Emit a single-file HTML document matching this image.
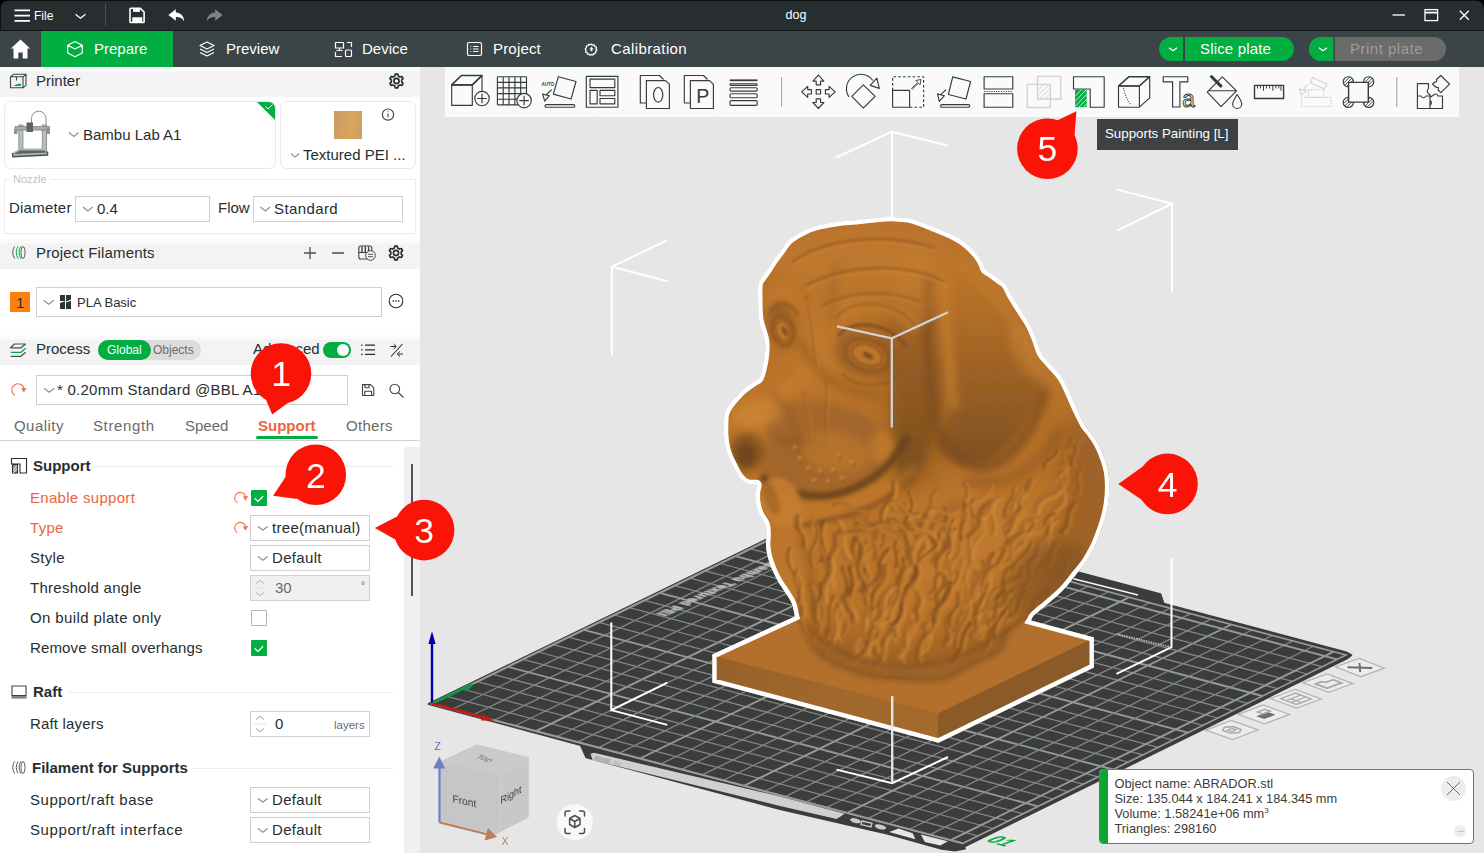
<!DOCTYPE html>
<html><head><meta charset="utf-8"><title>dog</title>
<style>
*{box-sizing:border-box;margin:0;padding:0}
html,body{width:1484px;height:853px;overflow:hidden;background:#e6e6e6;font-family:"Liberation Sans",sans-serif;color:#262e30}
.abs{position:absolute}
#titlebar{position:absolute;left:0;top:0;width:1484px;height:31px;background:#262e30;border-top:1px solid #0d0f10;border-left:1px solid #0d0f10;border-bottom:1px solid #15191a}
#tabbar{position:absolute;left:0;top:31px;width:1484px;height:36px;background:#3b4446}
#tabbar .tab{position:absolute;top:0;height:36px;color:#fff;font-size:15px;line-height:36px;white-space:nowrap}
#prep{position:absolute;left:41px;top:0;width:132px;height:36px;background:#00ae42}
.t{position:absolute;white-space:nowrap;line-height:1}
#left{position:absolute;left:0;top:67px;width:420px;height:786px;background:#fff;overflow:hidden}
.hdr{position:absolute;left:0;width:420px;background:linear-gradient(#fbfbfb 0,#fafafa 4px,#f3f3f3 5px,#f3f3f3 100%)}
.box{position:absolute;border:1px solid #dbdbdb;background:#fff}
#view{position:absolute;left:420px;top:67px;width:1064px;height:786px;background:#e6e6e6;overflow:hidden}
</style></head><body>
<div id="titlebar">
<svg class="abs" style="left:-1px;top:-1px" width="1484" height="31" viewBox="0 0 1484 31">
 <g stroke="#fff" stroke-width="1.7" fill="none">
  <path d="M14.5 10.3h15.5M14.5 15.6h15.5M14.5 20.9h15.5"/>
  <path d="M75.5 14.2l5 4 5-4" stroke-width="1.3"/>
 </g>
 <path d="M105.5 4v22" stroke="#4a5254" stroke-width="1"/>
 <g fill="none" stroke="#fff" stroke-width="1.6" stroke-linejoin="round">
  <path d="M130.8 8.3h9.5l3.8 3.8v9.6a0.8 0.8 0 0 1-.8.8h-12.5a0.8 0.8 0 0 1-.8-.8v-12.6a0.8 0.8 0 0 1 .8-.8z"/>
 </g>
 <rect x="133" y="8.3" width="7" height="3.6" fill="#fff"/>
 <rect x="132.3" y="17.3" width="10" height="5" fill="#fff"/>
 <path d="M175.8 9.2v3.4c5 .3 8 3.2 8.4 8.8-1.800-3.200-4.600-4.400-8.400-4.300v3.600l-7.400-5.800z" fill="#fff"/>
 <path d="M215.200 9.200v3.400c-5 .3-8 3.200-8.400 8.800 1.800-3.200 4.600-4.400 8.400-4.300v3.600l7.400-5.800z" fill="#7e8486"/>
 <g stroke="#fff" stroke-width="1.3" fill="none">
  <path d="M1392.500 15h12.500"/>
  <rect x="1425" y="9.600" width="12.600" height="11"/>
  <path d="M1425 12.600h12.600" stroke-width="1.800"/>
  <path d="M1459.800 10.800l9 9M1468.800 10.800l-9 9"/>
 </g>
</svg>
<span class="t" style="left:33px;top:8.500px;font-size:12px;color:#fff">File</span>
<span class="t" style="left:784.500px;top:8px;font-size:12.500px;color:#fff">dog</span>
</div>
<div id="tabbar"><div id="prep"></div>
<svg class="abs" style="left:0;top:0" width="1484" height="36" viewBox="0 31 1484 36">
 <path d="M20.500 39.500l9.600 9h-2.600v10h-4.800v-6h-4.400v6h-4.800v-10h-2.600z" fill="#fff"/>
 <g fill="none" stroke="#fff" stroke-width="1.200" stroke-linejoin="round">
  <path d="M75 41.500l7.300 3.700v7.800l-7.300 3.700-7.300-3.700v-7.800zM67.700 45.200l7.300 3.800 7.300-3.800"/>
  <path d="M207 42l7 3.500-7 3.500-7-3.500zM200 49l7 3.500 7-3.500M200 52.500l7 3.500 7-3.500"/>
  <rect x="335.500" y="42.500" width="8" height="5.500"/><path d="M339.500 48v2.500M336.500 50.500h6"/>
  <rect x="345.500" y="50" width="6" height="6.500" rx="1"/>
  <path d="M335.500 52v4.500h6.500M347 42.500h4.500v4.500"/>
  <rect x="467.500" y="42.500" width="14" height="13" rx="1.500"/><path d="M473 46.500h5.500M473 49h5.500M473 51.500h5.500M470.500 46.500h.8M470.500 49h.8M470.500 51.500h.8"/>
  <g transform="translate(591.500 49.300) scale(0.820) translate(-592 -49.300)" stroke-width="1.600"><path d="M592 43l1.500 1.300 2-.3 .7 1.900 1.800 .9-.5 1.900 1 1.700-1.400 1.400 0 2-1.900 .5-1 1.700-2-.4-1.700 1-1.400-1.400-2 0-.5-1.900-1.800-.9 .5-1.900-1-1.700 1.400-1.400 0-2 1.900-.5 1-1.700 2 .4z"/>
  <path d="M592 46.300l2.600 2.800h-1.600v2.600h-2v-2.600h-1.600z" fill="#fff" stroke="none"/></g>
 </g>
 <rect x="1159" y="37" width="135" height="24" rx="12" fill="#00ae42"/>
 <rect x="1183" y="37" width="2" height="24" fill="#3b4446"/>
 <rect x="1309" y="37" width="137" height="24" rx="12" fill="#6b6b6b"/>
 <path d="M1321 37h12.500v24h-12.500a12 12 0 0 1 0-24z" fill="#00ae42"/>
 <rect x="1333.500" y="37" width="1.500" height="24" fill="#3b4446"/>
 <path d="M1169 47.800l4 3 4-3M1319 47.800l4 3 4-3" stroke="#fff" stroke-width="1.300" fill="none"/>
</svg>
<span class="tab" style="left:94px">Prepare</span>
<span class="tab" style="left:226px">Preview</span>
<span class="tab" style="left:362px">Device</span>
<span class="tab" style="left:493px;letter-spacing:0.18px">Project</span>
<span class="tab" style="left:611px;letter-spacing:0.4px">Calibration</span>
<span class="tab" style="left:1200px;letter-spacing:0.16px">Slice plate</span>
<span class="tab" style="left:1350px;color:#9d9d9d;letter-spacing:0.5px">Print plate</span>
</div>
<div id="left">
<style>
#left .t{font-size:15px;color:#262e30}
#left .lbl{position:absolute;left:30px;font-size:15px;line-height:20px;white-space:nowrap;color:#262e30}
#left .cb{position:absolute;border:1px solid #cfcfcf;background:#fff;height:26px}
#left .cb span{position:absolute;top:3px;font-size:15px;line-height:17px;white-space:nowrap;color:#262e30}
#left .h{position:absolute;left:33px;font-size:15px;font-weight:bold;line-height:20px;white-space:nowrap;color:#262e30}
#left .ln{position:absolute;height:1px;background:#ececec}
.chk{position:absolute;width:16px;height:16px;background:#00ae42;border-radius:1px}
</style>
<!-- Printer header (page y=67) -->
<div class="hdr" style="top:0;height:30px"></div>
<span class="t" style="left:36px;top:6px">Printer</span>
<div class="box" style="left:4px;top:34px;width:272px;height:68px;border-radius:7px;border-color:#e9e9e9;overflow:hidden">
 <svg class="abs" style="right:0;top:0" width="18" height="18" viewBox="0 0 18 18"><path d="M0 0h18v18z" fill="#00ae42"/><path d="M8.500 4.500l2.500 2.500 4.500-4.500" stroke="#fff" stroke-width="1" fill="none"/></svg>
</div>
<span class="t" style="left:83px;top:60px">Bambu Lab A1</span>
<div class="box" style="left:280px;top:34px;width:136px;height:68px;border-radius:7px;border-color:#e9e9e9"></div>
<div class="abs" style="left:334px;top:44px;width:28px;height:28px;background:linear-gradient(100deg,#c79a63,#dba55e 60%,#c99d66)"></div>
<span class="t" style="left:303px;top:80px">Textured PEI ...</span>
<!-- Nozzle -->
<div class="box" style="left:4px;top:112px;width:412px;height:55px;border-color:#ececec"></div>
<span class="t" style="left:10px;top:107px;font-size:11px;color:#c3c3c3;background:#fff;padding:0 3px">Nozzle</span>
<span class="t" style="left:9px;top:133px;letter-spacing:0.22px">Diameter</span>
<div class="cb" style="left:75px;top:129px;width:135px"><span style="left:21px">0.4</span></div>
<span class="t" style="left:218px;top:133px">Flow</span>
<div class="cb" style="left:253px;top:129px;width:150px"><span style="left:20px;letter-spacing:0.4px">Standard</span></div>
<!-- Project Filaments -->
<div class="hdr" style="top:172px;height:30px"></div>
<span class="t" style="left:36px;top:178px;letter-spacing:0.17px">Project Filaments</span>
<div class="abs" style="left:10px;top:225px;width:20px;height:20px;background:#ff800f"></div>
<span class="t" style="left:16px;top:228px;font-size:15px">1</span>
<div class="cb" style="left:36px;top:220px;width:346px;height:30px"><span style="left:40px;top:6px;font-size:13px">PLA Basic</span></div>
<!-- Process -->
<div class="hdr" style="top:268px;height:30px"></div>
<span class="t" style="left:36px;top:274px">Process</span>
<div class="abs" style="left:97.500px;top:273px;width:103px;height:20px;border-radius:10px;background:#dcdcdc"></div>
<div class="abs" style="left:97.500px;top:273px;width:53.500px;height:20px;border-radius:10px;background:#00ae42"></div>
<span class="t" style="left:107px;top:277px;font-size:12px;color:#fff">Global</span>
<span class="t" style="left:153px;top:277px;font-size:12px;color:#6b6b6b">Objects</span>
<span class="t" style="left:253px;top:274px">Advanced</span>
<div class="abs" style="left:323px;top:275px;width:28px;height:16px;border-radius:8px;background:#00ae42"></div>
<div class="abs" style="left:337px;top:277px;width:12px;height:12px;border-radius:6px;background:#fff"></div>
<div class="cb" style="left:36px;top:308px;width:312px;height:30px"><span style="left:20px;top:5px;letter-spacing:0.25px">* 0.20mm Standard @BBL A1</span></div>
<!-- tabs -->
<span class="t" style="left:14px;top:351px;color:#6b6b6b;letter-spacing:0.45px">Quality</span>
<span class="t" style="left:93px;top:351px;color:#6b6b6b;letter-spacing:0.62px">Strength</span>
<span class="t" style="left:185px;top:351px;color:#6b6b6b">Speed</span>
<span class="t" style="left:258px;top:351px;color:#e9653f;font-weight:bold">Support</span>
<span class="t" style="left:346px;top:351px;color:#6b6b6b;letter-spacing:0.3px">Others</span>
<div class="abs" style="left:256px;top:369px;width:62px;height:3px;background:#00ae42;border-radius:1.5px"></div>
<div class="abs" style="left:0;top:373px;width:420px;height:1px;background:#d0d0d0"></div>
<!-- scroll track -->
<div class="abs" style="left:404px;top:380px;width:16px;height:406px;background:#f0f0f0"></div>
<div class="abs" style="left:411px;top:397px;width:2px;height:132px;background:#4f5354"></div>
<!-- options -->
<span class="h" style="top:389px">Support</span><div class="ln" style="left:95px;top:399px;width:298px"></div>
<span class="lbl" style="top:421px;color:#e9653f;letter-spacing:0.3px">Enable support</span>
<div class="chk" style="left:251px;top:423px"></div>
<span class="lbl" style="top:451px;color:#e9653f;letter-spacing:0.3px">Type</span>
<div class="cb" style="left:250px;top:448px;width:120px"><span style="left:21px;letter-spacing:0.3px">tree(manual)</span></div>
<span class="lbl" style="top:481px;letter-spacing:0.3px">Style</span>
<div class="cb" style="left:250px;top:478px;width:120px"><span style="left:21px;letter-spacing:0.33px">Default</span></div>
<span class="lbl" style="top:511px;letter-spacing:0.27px">Threshold angle</span>
<div class="cb" style="left:250px;top:508px;width:120px;background:#f0f0f0"><span style="left:24px;color:#6b6b6b">30</span><span style="left:110px;top:5px;font-size:10px;line-height:10px;color:#6b6b6b">°</span></div>
<span class="lbl" style="top:541px;letter-spacing:0.38px">On build plate only</span>
<div class="abs" style="left:251px;top:543px;width:16px;height:16px;border:1px solid #b4b4b4;background:#fff;border-radius:1px"></div>
<span class="lbl" style="top:571px;letter-spacing:0.15px">Remove small overhangs</span>
<div class="chk" style="left:251px;top:573px"></div>
<span class="h" style="top:615px">Raft</span><div class="ln" style="left:69px;top:625px;width:324px"></div>
<span class="lbl" style="top:647px;letter-spacing:0.17px">Raft layers</span>
<div class="cb" style="left:250px;top:644px;width:120px"><span style="left:24px">0</span><span style="left:83px;top:5px;font-size:11.500px;color:#6b6b6b">layers</span></div>
<span class="h" style="top:691px;left:32px">Filament for Supports</span><div class="ln" style="left:191px;top:701px;width:202px"></div>
<span class="lbl" style="top:723px;letter-spacing:0.52px">Support/raft base</span>
<div class="cb" style="left:250px;top:720px;width:120px"><span style="left:21px;letter-spacing:0.33px">Default</span></div>
<span class="lbl" style="top:753px;letter-spacing:0.6px">Support/raft interface</span>
<div class="cb" style="left:250px;top:750px;width:120px"><span style="left:21px;letter-spacing:0.33px">Default</span></div>
<svg id="lefticons" class="abs" style="left:0;top:0" width="420" height="786" viewBox="0 67 420 786"><g fill="none" stroke="#3b4446" stroke-width="1.100" stroke-linejoin="round"><path d="M10.500 76.800h12.500v11h-12.500zM10.500 76.800l3-2.500h12.500l-3 2.500M26 74.300v11l-3 2.500M16.500 77v3.500"/></g><path d="M13 86l5-2.300h3v2.300z" fill="#00ae42"/>
<path d="M394.86 75.94L395.26 74.11L397.74 74.11L398.14 75.94L400.06 77.05L401.85 76.48L403.09 78.63L401.70 79.89L401.70 82.11L403.09 83.37L401.85 85.52L400.06 84.95L398.14 86.06L397.74 87.89L395.26 87.89L394.86 86.06L392.94 84.95L391.15 85.52L389.91 83.37L391.30 82.11L391.30 79.89L389.91 78.63L391.15 76.48L392.94 77.05Z" fill="none" stroke="#262e30" stroke-width="1.65" stroke-linejoin="round"/><circle cx="396.5" cy="81.0" r="2.59" fill="none" stroke="#262e30" stroke-width="1.65"/>
<path d="M31.500 126v-7.500a7.300 7.300 0 0 1 14.600 0v35" fill="none" stroke="#7d8284" stroke-width="0.900"/><rect x="18.800" y="125" width="4.200" height="27" fill="#b9bdbf" stroke="#7d8284" stroke-width="0.700"/><rect x="42.200" y="125" width="4.200" height="29" fill="#b9bdbf" stroke="#7d8284" stroke-width="0.700"/><rect x="15" y="126.500" width="34.500" height="3.600" fill="#a7abad" stroke="#6d7274" stroke-width="0.600"/><rect x="14" y="129" width="3.500" height="5" fill="#8d9294"/><rect x="46.500" y="128" width="3.500" height="6" fill="#8d9294"/><rect x="26.500" y="122.500" width="6.500" height="9.500" fill="#5d6264"/><path d="M13 152.500l7.500-4h22.500l5 3.500v3l-34.500 1.800z" fill="#aeb2b4"/><path d="M12.500 153l0.500 3.800 34.500-1.800v-3.500" fill="none" stroke="#4a4f51" stroke-width="1.500"/><path d="M20 150.500h24l3 2-33 1.500z" fill="#5d6264"/>
<path d="M69.0 132.5l4.8 4.0l4.8 -4.0" fill="none" stroke="#8a8f91" stroke-width="1.1"/>
<path d="M291.0 153.5l4.0 3.6l4.0 -3.6" fill="none" stroke="#8a8f91" stroke-width="1.1"/>
<circle cx="388" cy="114.600" r="5.600" fill="none" stroke="#3b4446" stroke-width="1.200"/><path d="M388 113.500v3.800M388 111.300v1" stroke="#3b4446" stroke-width="1.100"/>
<path d="M83.0 207.0l4.8 4.0l4.8 -4.0" fill="none" stroke="#8a8f91" stroke-width="1.1"/>
<path d="M260.5 207.0l4.8 4.0l4.8 -4.0" fill="none" stroke="#8a8f91" stroke-width="1.1"/>
<g fill="none" stroke-width="1"><path d="M14.500 246.500q-3.500 6 0 12" stroke="#555b5d"/><path d="M18 246.500q-3.500 6 0 12M20.800 246.500q-3.500 6 0 12" stroke="#00ae42"/><ellipse cx="23" cy="252.500" rx="2" ry="6" stroke="#555b5d"/></g>
<path d="M304 253h12M310 247v12M332 253h12" stroke="#4a4f51" stroke-width="1.300" fill="none"/>
<g fill="none" stroke="#3b4446" stroke-width="1.100"><rect x="358.800" y="246" width="13" height="13" rx="2"/><path d="M359 252.500h12"/><path d="M362 246.500v6M365.300 246.500v6M368.600 246.500v6" stroke-width="1.400"/></g><circle cx="370.500" cy="255.500" r="4.800" fill="#f4f4f4" stroke="#3b4446" stroke-width="1"/><path d="M368 254.300h5M373 256.700h-5" stroke="#3b4446" stroke-width="0.900" fill="none"/>
<path d="M394.36 247.94L394.76 246.11L397.24 246.11L397.64 247.94L399.56 249.05L401.35 248.48L402.59 250.63L401.20 251.89L401.20 254.11L402.59 255.37L401.35 257.52L399.56 256.95L397.64 258.06L397.24 259.89L394.76 259.89L394.36 258.06L392.44 256.95L390.65 257.52L389.41 255.37L390.80 254.11L390.80 251.89L389.41 250.63L390.65 248.48L392.44 249.05Z" fill="none" stroke="#262e30" stroke-width="1.65" stroke-linejoin="round"/><circle cx="396.0" cy="253.0" r="2.59" fill="none" stroke="#262e30" stroke-width="1.65"/>
<path d="M43.5 300.3l5.2 4.0l5.2 -4.0" fill="none" stroke="#8a8f91" stroke-width="1.1"/>
<path d="M60 295h5v6h-5zM66 295h5v4.500l-5 2zM60 303l5-1.800v7.800h-5zM66 302.500l5-1.800v8.300h-5z" fill="#2b3436"/>
<circle cx="396" cy="301" r="6.800" fill="none" stroke="#262e30" stroke-width="1.100"/><path d="M392.600 301h1.400M395.300 301h1.400M398 301h1.400" stroke="#262e30" stroke-width="1.400"/>
<g fill="none" stroke-width="1.200" stroke-linejoin="round"><path d="M14.500 344h11l-4.500 3.800h-10.500z" stroke="#4a4f51"/><path d="M10.800 352.300h10.200l4.700-4" stroke="#00ae42"/><path d="M10.800 356.300h10.200l4.700-4" stroke="#4a4f51"/></g>
<g stroke="#262e30" stroke-width="1.300" fill="none"><path d="M365 345.200h10M365 349.800h10M365 354.400h10M361 345.200h1.500M361 349.800h1.500M361 354.400h1.500"/><path d="M391 356.500l11.500-12.500" stroke-width="1.100"/><path d="M390.500 346.500h5.500M393.500 344l2.800 2.500-2.800 2.500M403 354h-5.500M400 351.500l-2.800 2.500 2.800 2.500" stroke-width="1"/></g>
<path d="M14.90 395.37A6.20 6.20 0 1 1 24.11 388.92" fill="none" stroke="#f2704e" stroke-width="1.1"/><path d="M21.21 388.32l2.6 4.2l2.800 -4.600z" fill="#f2704e"/>
<path d="M44.0 388.3l5.2 4.0l5.2 -4.0" fill="none" stroke="#8a8f91" stroke-width="1.1"/>
<g fill="none" stroke="#3b4446" stroke-width="1.100" stroke-linejoin="round"><path d="M362.500 384.600h8l3.300 3.300v7.600h-11.300z"/><path d="M365 384.800v3h4v-3M364.800 395.300v-4h6.800v4"/><circle cx="394.800" cy="389" r="4.800"/><path d="M398.300 392.500l5.200 5"/></g>
<g fill="none" stroke="#262e30" stroke-width="1.100"><path d="M11.500 458.500h15v14.500h-6.500v-9h-8.500z"/><rect x="12.500" y="464.500" width="5" height="8.500" fill="#9a9d9e"/><path d="M13 470l4-4M13 473l4.500-4.500" stroke="#fff" stroke-width="0.800"/></g>
<path d="M237.40 502.85A5.60 5.60 0 1 1 245.71 497.03" fill="none" stroke="#f2704e" stroke-width="1.1"/><path d="M242.81 496.43l2.6 4.2l2.800 -4.600z" fill="#f2704e"/>
<path d="M237.40 532.85A5.60 5.60 0 1 1 245.71 527.03" fill="none" stroke="#f2704e" stroke-width="1.1"/><path d="M242.81 526.43l2.6 4.2l2.800 -4.600z" fill="#f2704e"/>
<path d="M254.6 498.2l3.300 3.200l5.200-5.200" fill="none" stroke="#fff" stroke-width="1.300"/>
<path d="M254.6 648.2l3.300 3.200l5.200-5.200" fill="none" stroke="#fff" stroke-width="1.300"/>
<path d="M258.0 526.5l4.8 3.8l4.8 -3.8" fill="none" stroke="#8a8f91" stroke-width="1.1"/>
<path d="M258.0 556.5l4.8 3.8l4.8 -3.8" fill="none" stroke="#8a8f91" stroke-width="1.1"/>
<path d="M258.0 798.5l4.8 3.8l4.8 -3.8" fill="none" stroke="#8a8f91" stroke-width="1.1"/>
<path d="M258.0 828.5l4.8 3.8l4.8 -3.8" fill="none" stroke="#8a8f91" stroke-width="1.1"/>
<path d="M256 583.5l4-3.200l4 3.200M256 592.5l4 3.200l4-3.200" fill="none" stroke="#a9acad" stroke-width="0.900"/><path d="M254 588.0h12" stroke="#dcdcdc" stroke-width="0.800"/>
<path d="M256 719.5l4-3.200l4 3.200M256 728.5l4 3.200l4-3.200" fill="none" stroke="#8f9394" stroke-width="0.900"/><path d="M254 724.0h12" stroke="#dcdcdc" stroke-width="0.800"/>
<g fill="none" stroke="#3b4446" stroke-width="1.100"><path d="M12 686h14v9.500h-14z"/></g><rect x="11.500" y="696" width="15" height="2.600" fill="#7e8384"/>
<g fill="none" stroke-width="1" stroke="#555b5d"><path d="M14.500 761.500q-3.500 6 0 12M18 761.500q-3.500 6 0 12M20.800 761.500q-3.500 6 0 12"/><ellipse cx="23" cy="767.500" rx="2" ry="6"/></g></svg>
</div>
<div id="view"><svg class="abs" style="left:0;top:0" width="1064" height="786" viewBox="420 67 1064 786">
<defs>
<filter id="b2" x="-20%" y="-20%" width="140%" height="140%"><feGaussianBlur stdDeviation="2"/></filter>
<filter id="b4" x="-30%" y="-30%" width="160%" height="160%"><feGaussianBlur stdDeviation="4"/></filter>
<filter id="b8" x="-30%" y="-30%" width="160%" height="160%"><feGaussianBlur stdDeviation="8"/></filter>
<filter id="b16" x="-40%" y="-40%" width="180%" height="180%"><feGaussianBlur stdDeviation="16"/></filter>
<filter id="b1" x="-20%" y="-20%" width="140%" height="140%"><feGaussianBlur stdDeviation="0.8"/></filter>
<linearGradient id="lf" x1="712" y1="0" x2="938" y2="0" gradientUnits="userSpaceOnUse"><stop offset="0" stop-color="#96612a"/><stop offset="0.45" stop-color="#9f672b"/><stop offset="1" stop-color="#a46a2b"/></linearGradient>
</defs>
<g stroke="#eeeeee" stroke-width="1" fill="none" opacity="0.8" stroke-dasharray="1 1"><path d="M452.800 118L527 548L598.300 118M649 118L681.300 199L716.600 118M711 118L747.500 157.500L787.500 118M672 240L546.700 494.500M1218 118L1100 330M836 160L602 369"/></g>
<polygon points="428.7,704.0 580.8,745.1 586.2,757.2 780,809 887.8,833.9 941.7,848.7 955,850.5 965,848.5 963.6,846.9 1346.6,658.6 1351.2,655.2 1345.6,652.1 1163.6,603.6 1160.4,594.3 1033.1,560.4 1009.5,562.6 822.1,512.7" fill="#3b3d3d" stroke="#3b3d3d" stroke-width="2" stroke-linejoin="round"/>
<path d="M431.6 703.8 L820.0 515.0 M431.6 703.8 L963.0 843.3" stroke="#979a9a" stroke-width="1.9" fill="none"/>
<path d="M452.5 709.3 L840.7 520.5 M446.9 696.4 L978.0 835.9" stroke="#858888" stroke-width="1.25" fill="none"/>
<path d="M473.4 714.8 L861.3 526.0 M462.1 689.0 L993.1 828.5" stroke="#858888" stroke-width="1.25" fill="none"/>
<path d="M494.2 720.2 L882.0 531.5 M477.3 681.6 L1008.1 821.1" stroke="#858888" stroke-width="1.25" fill="none"/>
<path d="M515.1 725.7 L902.6 537.0 M492.6 674.2 L1023.1 813.7" stroke="#858888" stroke-width="1.25" fill="none"/>
<path d="M535.9 731.2 L923.3 542.5 M507.8 666.8 L1038.1 806.4" stroke="#979a9a" stroke-width="1.9" fill="none"/>
<path d="M556.8 736.7 L943.9 548.0 M523.0 659.4 L1053.1 799.0" stroke="#858888" stroke-width="1.25" fill="none"/>
<path d="M577.6 742.1 L964.5 553.5 M538.2 652.0 L1068.1 791.6" stroke="#858888" stroke-width="1.25" fill="none"/>
<path d="M598.4 747.6 L985.1 558.9 M553.4 644.6 L1083.1 784.2" stroke="#858888" stroke-width="1.25" fill="none"/>
<path d="M619.2 753.1 L1005.7 564.4 M568.6 637.2 L1098.1 776.9" stroke="#858888" stroke-width="1.25" fill="none"/>
<path d="M640.0 758.5 L1026.3 569.9 M583.8 629.8 L1113.1 769.5" stroke="#979a9a" stroke-width="1.9" fill="none"/>
<path d="M660.8 764.0 L1046.9 575.4 M599.0 622.4 L1128.1 762.1" stroke="#858888" stroke-width="1.25" fill="none"/>
<path d="M681.6 769.4 L1067.4 580.9 M614.2 615.0 L1143.0 754.8" stroke="#858888" stroke-width="1.25" fill="none"/>
<path d="M702.3 774.9 L1088.0 586.3 M629.4 607.7 L1158.0 747.4" stroke="#858888" stroke-width="1.25" fill="none"/>
<path d="M723.1 780.3 L1108.5 591.8 M644.5 600.3 L1173.0 740.1" stroke="#858888" stroke-width="1.25" fill="none"/>
<path d="M743.8 785.8 L1129.0 597.3 M659.7 592.9 L1187.9 732.7" stroke="#979a9a" stroke-width="1.9" fill="none"/>
<path d="M764.6 791.2 L1149.6 602.7 M674.8 585.6 L1202.9 725.4" stroke="#858888" stroke-width="1.25" fill="none"/>
<path d="M785.3 796.6 L1170.1 608.2 M690.0 578.2 L1217.8 718.0" stroke="#858888" stroke-width="1.25" fill="none"/>
<path d="M806.0 802.1 L1190.6 613.6 M705.1 570.8 L1232.7 710.7" stroke="#858888" stroke-width="1.25" fill="none"/>
<path d="M826.7 807.5 L1211.1 619.1 M720.3 563.5 L1247.6 703.4" stroke="#858888" stroke-width="1.25" fill="none"/>
<path d="M847.4 812.9 L1231.5 624.5 M735.4 556.1 L1262.6 696.0" stroke="#979a9a" stroke-width="1.9" fill="none"/>
<path d="M868.0 818.4 L1252.0 630.0 M750.5 548.8 L1277.5 688.7" stroke="#858888" stroke-width="1.25" fill="none"/>
<path d="M888.7 823.8 L1272.5 635.4 M765.6 541.4 L1292.4 681.4" stroke="#858888" stroke-width="1.25" fill="none"/>
<path d="M909.4 829.2 L1292.9 640.9 M780.7 534.1 L1307.3 674.0" stroke="#858888" stroke-width="1.25" fill="none"/>
<path d="M930.0 834.6 L1313.3 646.3 M795.8 526.7 L1322.2 666.7" stroke="#858888" stroke-width="1.25" fill="none"/>
<path d="M950.6 840.1 L1333.8 651.7 M810.9 519.4 L1337.1 659.4" stroke="#979a9a" stroke-width="1.9" fill="none"/>
<polygon points="431.6,703.8 963.0,843.3 1346.0,655.0 820.0,515.0" fill="none" stroke="#979a9a" stroke-width="1.700"/>
<polygon points="590.5,753.8 594,752.8 780,796.6 844.7,813.7 836.6,819.1 780,806 592.5,760" fill="#cfd1d1"/>
<polygon points="595,755.5 611,759.3 609,764 594,760.2" fill="#a9abab" opacity="0.8"/>
<polygon points="614,760.5 622,762.4 620.500,766.5 612.500,764.600" fill="#b9bbbb" opacity="0.7"/>
<ellipse cx="855.5" cy="820.7" rx="5.500" ry="2.300" transform="rotate(14 855.5 820.7)" fill="#c9cbcb"/>
<polygon points="862,821 872,823.300 871,827 861,824.600" fill="none" stroke="#c9cbcb" stroke-width="1.400"/>
<ellipse cx="880.4" cy="826.9" rx="5.800" ry="2.300" transform="rotate(14 880.4 826.9)" fill="#c9cbcb"/>
<polygon points="898.6,828.5 912.7,833.2 915.4,839.3 889.2,831.9" fill="#e6e6e6"/>
<polygon points="920.8,834.6 947.8,841.3 940.4,845.4 924.9,842" fill="#e6e6e6"/>
<polygon points="1335.3,666.9 1359.2,658.4 1384.5,668.2 1360.6,676.7" fill="#ececec" stroke="#b3b5b5" stroke-width="1.300"/>
<polygon points="1303.0,682.7 1327.2,673.9 1352.8,683.6 1328.6,692.4" fill="#ececec" stroke="#b3b5b5" stroke-width="1.300"/>
<polygon points="1270.6,698.5 1295.2,689.4 1321.2,699.0 1296.6,708.1" fill="#ececec" stroke="#b3b5b5" stroke-width="1.300"/>
<polygon points="1238.2,714.3 1263.2,704.9 1289.5,714.4 1264.6,723.8" fill="#ececec" stroke="#b3b5b5" stroke-width="1.300"/>
<polygon points="1205.9,730.1 1231.2,720.4 1257.9,729.8 1232.6,739.5" fill="#ececec" stroke="#b3b5b5" stroke-width="1.300"/>
<path d="M1347.6 667.2L1372.2 667.9M1359.5 663.0L1360.2 672.1" stroke="#6d7070" stroke-width="2" fill="none"/>
<polygon points="1315.5,683.9 1321.6,681.7 1325.8,682.4 1333.1,679.7 1341.6,682.9 1327.0,688.2" fill="none" stroke="#a9abab" stroke-width="1.800"/>
<polygon points="1280.7,698.6 1295.5,693.1 1311.1,698.9 1296.3,704.4" fill="none" stroke="#a9abab" stroke-width="1.500"/>
<path d="M1285.9 700.5L1300.7 695.1M1291.1 702.4L1305.9 697.0M1290.8 698.7L1301.2 702.5" stroke="#a9abab" stroke-width="1.300" fill="none"/>
<polygon points="1256.3,716.2 1267.6,712.0 1275.5,714.8 1264.2,719.1" fill="#6d7070"/>
<polygon points="1262.6,713.9 1257.3,712.0 1264.8,709.2 1270.1,711.1" fill="none" stroke="#a9abab" stroke-width="1.500"/>
<polygon points="1222.8,730.5 1224.4,727.3 1233.0,726.6 1241.0,729.4 1239.4,732.6 1230.8,733.3" fill="none" stroke="#a9abab" stroke-width="1.600"/>
<polygon points="1227.7,730.0 1231.8,728.4 1236.1,729.9 1232.0,731.5" fill="none" stroke="#a9abab" stroke-width="1.300"/>
<text transform="matrix(0.92 0.27 -0.9 0.44 985.0 841.0)" font-family="Liberation Sans, sans-serif" font-weight="bold" font-style="italic" font-size="20" fill="#00ae42">01</text>
<text transform="matrix(-0.85 0.386 -1.0 -0.27 770.5 562)" font-family="Liberation Sans, sans-serif" font-weight="bold" font-size="13" letter-spacing="0.500" fill="#b9bbbb" stroke="#b9bbbb" stroke-width="0.900" opacity="0.95" filter="url(#b1)">Bambu Textured PEI</text>
<text transform="matrix(-0.85 0.386 -1.0 -0.27 770.5 562)" font-family="Liberation Sans, sans-serif" font-weight="bold" font-size="13" letter-spacing="0.500" fill="#b9bbbb" stroke="#b9bbbb" stroke-width="0.900" opacity="0.5">Bambu Textured PEI</text>
<path d="M667.500 240.100L611.800 266.700L667.500 281.300M611.800 266.700V355.500" stroke="#fff" stroke-width="2" fill="none"/>
<path d="M836 157.500L892 131.700L947.700 145.500M892 131.700V218" stroke="#fff" stroke-width="2" fill="none"/>
<path d="M1116.700 189.400L1172 203.700L1116.700 230.800M1172 203.700V291.700" stroke="#fff" stroke-width="2" fill="none"/>
<path d="M611.300 622.500V710.100L667.300 682.600M611.300 710.100L667.300 724.900" stroke="#fff" stroke-width="2" fill="none"/>
<path d="M1171.500 558.300V647.200L1116.500 673.900" stroke="#fff" stroke-width="2" fill="none"/>
<path d="M1171.500 647.200L1116.500 633.700" stroke="#cfd0d0" stroke-width="1.300" stroke-dasharray="1.500 1" fill="none"/>
<path d="M836.400 769.600L892.200 783.200L948 757" stroke="#fff" stroke-width="2" fill="none"/>
<path d="M1073.400 578.800L1138.100 595" stroke="#f4f4f4" stroke-width="1.600" fill="none"/>
<path d="M794.9 616.4C794.4 614.3 793.4 607.5 791.9 603.6C790.4 599.7 787.9 596.5 785.7 593.0C783.5 589.5 780.9 586.3 778.7 582.5C776.5 578.7 774.3 574.3 772.5 570.2C770.7 566.1 769.2 562.0 768.1 557.9C767.0 553.8 766.3 549.4 766.0 545.6C765.7 541.8 766.5 538.5 766.4 535.0C766.3 531.5 766.7 528.0 765.5 524.5C764.3 521.0 760.8 517.4 759.3 513.9C757.8 510.4 756.8 507.0 756.2 503.4C755.6 499.8 755.6 495.1 755.8 492.0C756.0 488.9 757.5 486.3 757.2 485.0C756.9 483.7 755.9 484.4 754.2 484.2C752.5 483.9 749.6 484.7 747.1 483.5C744.6 482.3 741.6 479.9 739.4 477.2C737.2 474.5 735.5 470.7 733.8 467.4C732.0 464.1 730.3 461.0 728.9 457.5C727.5 454.0 726.2 450.1 725.4 446.3C724.6 442.6 724.2 438.8 724.0 435.0C723.8 431.2 723.9 427.3 724.0 423.8C724.1 420.3 723.9 417.1 724.7 414.0C725.5 410.9 727.0 408.3 728.9 405.5C730.8 402.7 733.3 399.9 735.9 397.1C738.5 394.3 741.2 391.3 744.3 388.7C747.3 386.1 751.8 383.3 754.2 381.6C756.7 379.9 757.7 380.4 759.0 378.5C760.3 376.6 761.0 373.9 762.0 370.0C763.0 366.1 764.3 360.0 764.8 355.0C765.3 350.0 765.7 345.8 764.8 340.0C763.9 334.2 760.3 326.7 759.2 320.0C758.1 313.3 758.2 305.8 758.1 300.0C758.0 294.2 757.9 288.3 758.3 285.0C758.6 281.7 758.7 282.5 760.2 280.0C761.7 277.5 765.0 273.3 767.2 270.0C769.5 266.7 771.4 263.3 773.7 260.0C776.0 256.7 778.8 253.2 781.2 250.0C783.6 246.8 785.6 243.1 788.1 240.6C790.6 238.1 793.5 236.6 796.2 234.9C798.9 233.2 801.6 231.8 804.3 230.5C807.0 229.2 809.6 228.1 812.3 227.2C815.0 226.2 817.7 225.5 820.4 224.8C823.1 224.1 825.8 223.7 828.5 223.2C831.2 222.7 833.9 222.4 836.6 222.0C839.3 221.6 842.0 221.2 844.7 220.9C847.4 220.6 850.1 220.6 852.8 220.4C855.5 220.2 858.1 219.9 860.8 219.6C863.5 219.3 866.2 219.0 868.9 218.7C871.6 218.4 874.3 218.1 877.0 217.8C879.7 217.5 882.5 217.2 885.1 217.1C887.7 216.9 889.8 216.8 892.4 216.9C895.0 217.0 897.5 217.2 900.6 217.5C903.7 217.8 907.6 217.9 911.1 218.7C914.6 219.5 918.2 221.1 921.7 222.4C925.2 223.7 928.7 225.2 932.2 226.6C935.7 228.0 939.3 229.4 942.8 230.9C946.3 232.4 949.8 233.8 953.3 235.6C956.8 237.4 960.7 239.6 963.9 241.9C967.1 244.2 969.8 246.8 972.3 249.3C974.8 251.8 976.9 254.2 978.7 256.7C980.5 259.2 981.9 262.0 982.9 264.1C983.9 266.2 983.6 267.8 985.0 269.4C986.4 271.0 988.8 271.9 991.3 273.6C993.8 275.4 997.3 278.0 999.8 279.9C1002.3 281.8 1004.2 282.7 1006.1 285.2C1008.0 287.7 1008.9 290.9 1011.3 295.0C1013.7 299.1 1017.5 305.0 1020.6 310.0C1023.7 315.0 1027.3 320.0 1030.0 325.0C1032.7 330.0 1034.7 335.3 1036.6 340.0C1038.5 344.7 1039.0 349.0 1041.3 353.1C1043.6 357.2 1047.2 360.3 1050.6 364.4C1054.0 368.5 1058.8 372.8 1061.9 377.5C1065.0 382.2 1066.9 387.2 1069.4 392.5C1071.9 397.8 1074.4 404.1 1076.9 409.4C1079.4 414.7 1082.1 420.5 1084.4 424.4C1086.8 428.3 1088.6 429.6 1091.0 433.0C1093.4 436.4 1096.4 440.4 1098.7 444.8C1101.0 449.2 1103.2 454.7 1104.9 459.6C1106.6 464.5 1107.9 469.5 1108.6 474.4C1109.3 479.3 1109.4 484.2 1109.3 489.1C1109.2 494.0 1108.8 499.0 1108.1 503.9C1107.4 508.8 1106.3 513.8 1104.9 518.7C1103.5 523.6 1101.8 528.6 1099.9 533.5C1098.1 538.4 1096.2 543.4 1093.8 548.3C1091.3 553.2 1088.3 558.6 1085.2 563.1C1082.1 567.6 1079.0 570.9 1075.3 575.4C1071.6 579.9 1067.3 585.7 1063.0 590.2C1058.7 594.7 1054.1 598.4 1049.4 602.5C1044.7 606.6 1037.7 611.8 1034.6 614.8C1031.5 617.8 1031.6 619.6 1031.0 620.6L1093.9 637.4L1093.9 667.5L938.6 742.8L712.3 682.6L712.3 654.5Z" fill="#fff"/>
<clipPath id="dogclip"><path d="M794.9 616.4C794.4 614.3 793.4 607.5 791.9 603.6C790.4 599.7 787.9 596.5 785.7 593.0C783.5 589.5 780.9 586.3 778.7 582.5C776.5 578.7 774.3 574.3 772.5 570.2C770.7 566.1 769.2 562.0 768.1 557.9C767.0 553.8 766.3 549.4 766.0 545.6C765.7 541.8 766.5 538.5 766.4 535.0C766.3 531.5 766.7 528.0 765.5 524.5C764.3 521.0 760.8 517.4 759.3 513.9C757.8 510.4 756.8 507.0 756.2 503.4C755.6 499.8 755.6 495.1 755.8 492.0C756.0 488.9 757.5 486.3 757.2 485.0C756.9 483.7 755.9 484.4 754.2 484.2C752.5 483.9 749.6 484.7 747.1 483.5C744.6 482.3 741.6 479.9 739.4 477.2C737.2 474.5 735.5 470.7 733.8 467.4C732.0 464.1 730.3 461.0 728.9 457.5C727.5 454.0 726.2 450.1 725.4 446.3C724.6 442.6 724.2 438.8 724.0 435.0C723.8 431.2 723.9 427.3 724.0 423.8C724.1 420.3 723.9 417.1 724.7 414.0C725.5 410.9 727.0 408.3 728.9 405.5C730.8 402.7 733.3 399.9 735.9 397.1C738.5 394.3 741.2 391.3 744.3 388.7C747.3 386.1 751.8 383.3 754.2 381.6C756.7 379.9 757.7 380.4 759.0 378.5C760.3 376.6 761.0 373.9 762.0 370.0C763.0 366.1 764.3 360.0 764.8 355.0C765.3 350.0 765.7 345.8 764.8 340.0C763.9 334.2 760.3 326.7 759.2 320.0C758.1 313.3 758.2 305.8 758.1 300.0C758.0 294.2 757.9 288.3 758.3 285.0C758.6 281.7 758.7 282.5 760.2 280.0C761.7 277.5 765.0 273.3 767.2 270.0C769.5 266.7 771.4 263.3 773.7 260.0C776.0 256.7 778.8 253.2 781.2 250.0C783.6 246.8 785.6 243.1 788.1 240.6C790.6 238.1 793.5 236.6 796.2 234.9C798.9 233.2 801.6 231.8 804.3 230.5C807.0 229.2 809.6 228.1 812.3 227.2C815.0 226.2 817.7 225.5 820.4 224.8C823.1 224.1 825.8 223.7 828.5 223.2C831.2 222.7 833.9 222.4 836.6 222.0C839.3 221.6 842.0 221.2 844.7 220.9C847.4 220.6 850.1 220.6 852.8 220.4C855.5 220.2 858.1 219.9 860.8 219.6C863.5 219.3 866.2 219.0 868.9 218.7C871.6 218.4 874.3 218.1 877.0 217.8C879.7 217.5 882.5 217.2 885.1 217.1C887.7 216.9 889.8 216.8 892.4 216.9C895.0 217.0 897.5 217.2 900.6 217.5C903.7 217.8 907.6 217.9 911.1 218.7C914.6 219.5 918.2 221.1 921.7 222.4C925.2 223.7 928.7 225.2 932.2 226.6C935.7 228.0 939.3 229.4 942.8 230.9C946.3 232.4 949.8 233.8 953.3 235.6C956.8 237.4 960.7 239.6 963.9 241.9C967.1 244.2 969.8 246.8 972.3 249.3C974.8 251.8 976.9 254.2 978.7 256.7C980.5 259.2 981.9 262.0 982.9 264.1C983.9 266.2 983.6 267.8 985.0 269.4C986.4 271.0 988.8 271.9 991.3 273.6C993.8 275.4 997.3 278.0 999.8 279.9C1002.3 281.8 1004.2 282.7 1006.1 285.2C1008.0 287.7 1008.9 290.9 1011.3 295.0C1013.7 299.1 1017.5 305.0 1020.6 310.0C1023.7 315.0 1027.3 320.0 1030.0 325.0C1032.7 330.0 1034.7 335.3 1036.6 340.0C1038.5 344.7 1039.0 349.0 1041.3 353.1C1043.6 357.2 1047.2 360.3 1050.6 364.4C1054.0 368.5 1058.8 372.8 1061.9 377.5C1065.0 382.2 1066.9 387.2 1069.4 392.5C1071.9 397.8 1074.4 404.1 1076.9 409.4C1079.4 414.7 1082.1 420.5 1084.4 424.4C1086.8 428.3 1088.6 429.6 1091.0 433.0C1093.4 436.4 1096.4 440.4 1098.7 444.8C1101.0 449.2 1103.2 454.7 1104.9 459.6C1106.6 464.5 1107.9 469.5 1108.6 474.4C1109.3 479.3 1109.4 484.2 1109.3 489.1C1109.2 494.0 1108.8 499.0 1108.1 503.9C1107.4 508.8 1106.3 513.8 1104.9 518.7C1103.5 523.6 1101.8 528.6 1099.9 533.5C1098.1 538.4 1096.2 543.4 1093.8 548.3C1091.3 553.2 1088.3 558.6 1085.2 563.1C1082.1 567.6 1079.0 570.9 1075.3 575.4C1071.6 579.9 1067.3 585.7 1063.0 590.2C1058.7 594.7 1054.1 598.4 1049.4 602.5C1044.7 606.6 1037.7 611.8 1034.6 614.8C1031.5 617.8 1031.6 619.6 1031.0 620.6L1093.9 637.4L1093.9 667.5L938.6 742.8L712.3 682.6L712.3 654.5Z"/></clipPath>
<g clip-path="url(#dogclip)">
<path d="M794.9 616.4C794.4 614.3 793.4 607.5 791.9 603.6C790.4 599.7 787.9 596.5 785.7 593.0C783.5 589.5 780.9 586.3 778.7 582.5C776.5 578.7 774.3 574.3 772.5 570.2C770.7 566.1 769.2 562.0 768.1 557.9C767.0 553.8 766.3 549.4 766.0 545.6C765.7 541.8 766.5 538.5 766.4 535.0C766.3 531.5 766.7 528.0 765.5 524.5C764.3 521.0 760.8 517.4 759.3 513.9C757.8 510.4 756.8 507.0 756.2 503.4C755.6 499.8 755.6 495.1 755.8 492.0C756.0 488.9 757.5 486.3 757.2 485.0C756.9 483.7 755.9 484.4 754.2 484.2C752.5 483.9 749.6 484.7 747.1 483.5C744.6 482.3 741.6 479.9 739.4 477.2C737.2 474.5 735.5 470.7 733.8 467.4C732.0 464.1 730.3 461.0 728.9 457.5C727.5 454.0 726.2 450.1 725.4 446.3C724.6 442.6 724.2 438.8 724.0 435.0C723.8 431.2 723.9 427.3 724.0 423.8C724.1 420.3 723.9 417.1 724.7 414.0C725.5 410.9 727.0 408.3 728.9 405.5C730.8 402.7 733.3 399.9 735.9 397.1C738.5 394.3 741.2 391.3 744.3 388.7C747.3 386.1 751.8 383.3 754.2 381.6C756.7 379.9 757.7 380.4 759.0 378.5C760.3 376.6 761.0 373.9 762.0 370.0C763.0 366.1 764.3 360.0 764.8 355.0C765.3 350.0 765.7 345.8 764.8 340.0C763.9 334.2 760.3 326.7 759.2 320.0C758.1 313.3 758.2 305.8 758.1 300.0C758.0 294.2 757.9 288.3 758.3 285.0C758.6 281.7 758.7 282.5 760.2 280.0C761.7 277.5 765.0 273.3 767.2 270.0C769.5 266.7 771.4 263.3 773.7 260.0C776.0 256.7 778.8 253.2 781.2 250.0C783.6 246.8 785.6 243.1 788.1 240.6C790.6 238.1 793.5 236.6 796.2 234.9C798.9 233.2 801.6 231.8 804.3 230.5C807.0 229.2 809.6 228.1 812.3 227.2C815.0 226.2 817.7 225.5 820.4 224.8C823.1 224.1 825.8 223.7 828.5 223.2C831.2 222.7 833.9 222.4 836.6 222.0C839.3 221.6 842.0 221.2 844.7 220.9C847.4 220.6 850.1 220.6 852.8 220.4C855.5 220.2 858.1 219.9 860.8 219.6C863.5 219.3 866.2 219.0 868.9 218.7C871.6 218.4 874.3 218.1 877.0 217.8C879.7 217.5 882.5 217.2 885.1 217.1C887.7 216.9 889.8 216.8 892.4 216.9C895.0 217.0 897.5 217.2 900.6 217.5C903.7 217.8 907.6 217.9 911.1 218.7C914.6 219.5 918.2 221.1 921.7 222.4C925.2 223.7 928.7 225.2 932.2 226.6C935.7 228.0 939.3 229.4 942.8 230.9C946.3 232.4 949.8 233.8 953.3 235.6C956.8 237.4 960.7 239.6 963.9 241.9C967.1 244.2 969.8 246.8 972.3 249.3C974.8 251.8 976.9 254.2 978.7 256.7C980.5 259.2 981.9 262.0 982.9 264.1C983.9 266.2 983.6 267.8 985.0 269.4C986.4 271.0 988.8 271.9 991.3 273.6C993.8 275.4 997.3 278.0 999.8 279.9C1002.3 281.8 1004.2 282.7 1006.1 285.2C1008.0 287.7 1008.9 290.9 1011.3 295.0C1013.7 299.1 1017.5 305.0 1020.6 310.0C1023.7 315.0 1027.3 320.0 1030.0 325.0C1032.7 330.0 1034.7 335.3 1036.6 340.0C1038.5 344.7 1039.0 349.0 1041.3 353.1C1043.6 357.2 1047.2 360.3 1050.6 364.4C1054.0 368.5 1058.8 372.8 1061.9 377.5C1065.0 382.2 1066.9 387.2 1069.4 392.5C1071.9 397.8 1074.4 404.1 1076.9 409.4C1079.4 414.7 1082.1 420.5 1084.4 424.4C1086.8 428.3 1088.6 429.6 1091.0 433.0C1093.4 436.4 1096.4 440.4 1098.7 444.8C1101.0 449.2 1103.2 454.7 1104.9 459.6C1106.6 464.5 1107.9 469.5 1108.6 474.4C1109.3 479.3 1109.4 484.2 1109.3 489.1C1109.2 494.0 1108.8 499.0 1108.1 503.9C1107.4 508.8 1106.3 513.8 1104.9 518.7C1103.5 523.6 1101.8 528.6 1099.9 533.5C1098.1 538.4 1096.2 543.4 1093.8 548.3C1091.3 553.2 1088.3 558.6 1085.2 563.1C1082.1 567.6 1079.0 570.9 1075.3 575.4C1071.6 579.9 1067.3 585.7 1063.0 590.2C1058.7 594.7 1054.1 598.4 1049.4 602.5C1044.7 606.6 1037.7 611.8 1034.6 614.8C1031.5 617.8 1031.6 619.6 1031.0 620.6L1093.9 637.4L1093.9 667.5L938.6 742.8L712.3 682.6L712.3 654.5Z" fill="#b9732a"/>
<g filter="url(#b16)">
<ellipse cx="865" cy="262" rx="95" ry="28" fill="#c88031" opacity="0.45"/>
<path d="M905 300C915 360 905 420 925 490" stroke="#8c5722" stroke-width="46" fill="none" opacity="0.6"/>
<ellipse cx="985" cy="425" rx="38" ry="40" fill="#8c5722" opacity="0.35"/>
<path d="M1075 420C1100 470 1100 530 1060 600" stroke="#8c5722" stroke-width="50" fill="none" opacity="0.7"/>
<ellipse cx="960" cy="540" rx="75" ry="55" fill="#c88031" opacity="0.45"/>
<ellipse cx="805" cy="560" rx="30" ry="50" fill="#c88031" opacity="0.5"/>
<ellipse cx="770" cy="415" rx="40" ry="22" fill="#c88031" opacity="0.6"/>
<ellipse cx="820" cy="350" rx="28" ry="40" fill="#c88031" opacity="0.45"/>
<path d="M815 640C860 672 960 675 1010 630" stroke="#8c5722" stroke-width="36" fill="none" opacity="0.75"/>
</g>
<defs><linearGradient id="earg" x1="0" y1="275" x2="0" y2="470" gradientUnits="userSpaceOnUse"><stop offset="0" stop-color="#b56f28" stop-opacity="0"/><stop offset="0.35" stop-color="#9c6226" stop-opacity="0.7"/><stop offset="1" stop-color="#7a4e21" stop-opacity="0.95"/></linearGradient><linearGradient id="sideg" x1="0" y1="290" x2="0" y2="480" gradientUnits="userSpaceOnUse"><stop offset="0" stop-color="#a56728" stop-opacity="0"/><stop offset="0.4" stop-color="#8f5b25" stop-opacity="0.75"/><stop offset="1" stop-color="#774b20" stop-opacity="0.9"/></linearGradient></defs>
<path d="M940 285C952 320 954 360 950 400C946 425 938 436 932 441C945 462 965 470 985 464C1005 458 1030 420 1048 386C1044 360 1030 325 1010 296C990 272 960 268 940 285Z" fill="url(#earg)" filter="url(#b4)"/>
<path d="M900 305C915 300 930 300 940 310C950 350 950 400 932 441C925 470 915 485 900 490C888 450 888 360 900 305Z" fill="url(#sideg)" filter="url(#b4)"/>
<ellipse cx="1026" cy="352" rx="13" ry="30" fill="#c88031" opacity="0.55" transform="rotate(-28 1026 352)" filter="url(#b4)"/>
<g filter="url(#b4)">
<path d="M930 275C925 320 928 380 934 417C938 440 955 462 982 467C1010 465 1035 430 1047 385" stroke="#7c4c1f" stroke-width="9" fill="none" opacity="0.85"/>
<path d="M945 272C945 320 948 370 955 410" stroke="#c88031" stroke-width="9" fill="none" opacity="0.65"/>
<path d="M965 480C1000 492 1040 470 1060 430" stroke="#8c5722" stroke-width="12" fill="none" opacity="0.55"/>
<path d="M960 262C1000 290 1030 340 1050 390" stroke="#c88031" stroke-width="12" fill="none" opacity="0.45"/>
<ellipse cx="782" cy="326" rx="14" ry="24" fill="#8c5722" opacity="0.7" transform="rotate(-12 782 326)"/>
<ellipse cx="866" cy="354" rx="32" ry="22" fill="#8c5722" opacity="0.7" transform="rotate(15 866 354)"/>
<path d="M832 322C850 298 895 300 915 330" stroke="#c88031" stroke-width="9" fill="none" opacity="0.7"/>
<path d="M768 300C776 288 792 288 800 304" stroke="#c88031" stroke-width="7" fill="none" opacity="0.6"/>
<path d="M770 405C800 395 850 400 878 425C890 445 888 462 880 470C860 487 825 497 800 493C785 491 770 483 762 476C765 455 765 430 770 405Z" fill="#96602a" opacity="0.62"/>
<ellipse cx="757" cy="413" rx="27" ry="13" fill="#d18a38" opacity="0.6" transform="rotate(-12 757 413)"/>
<ellipse cx="747" cy="452" rx="17" ry="19" fill="#7c4c1f" opacity="0.85"/>
<path d="M775 436C792 447 803 440 818 446" stroke="#7c4c1f" stroke-width="6" fill="none" opacity="0.6"/>
<ellipse cx="882" cy="448" rx="12" ry="16" fill="#c88031" opacity="0.7"/>
<path d="M812 368C795 385 775 398 752 408" stroke="#c88031" stroke-width="12" fill="none" opacity="0.55"/>
<path d="M800 340C812 372 838 392 880 396" stroke="#8c5722" stroke-width="8" fill="none" opacity="0.55"/>
<path d="M770 392C790 410 800 430 800 455" stroke="#8c5722" stroke-width="7" fill="none" opacity="0.5"/>
<ellipse cx="835" cy="452" rx="34" ry="20" fill="#c88031" opacity="0.45" transform="rotate(12 835 452)"/>
<path d="M800 512C840 512 880 498 915 468" stroke="#c88031" stroke-width="9" fill="none" opacity="0.55"/>
<path d="M838 262C832 285 830 305 834 325" stroke="#8c5722" stroke-width="6" fill="none" opacity="0.45"/>
<ellipse cx="915" cy="290" rx="22" ry="38" fill="#c88031" opacity="0.4"/>
<path d="M800 535C815 560 810 600 822 640" stroke="#8c5722" stroke-width="10" fill="none" opacity="0.55"/>
<path d="M860 520C880 540 920 540 960 500" stroke="#8c5722" stroke-width="10" fill="none" opacity="0.5"/>
</g>
<g filter="url(#b2)">
<path d="M761 476C775 488 800 497 822 496C850 494 872 480 886 467C896 456 903 447 908 436" stroke="#6a431e" stroke-width="8" fill="none" opacity="0.9"/>
<ellipse cx="780" cy="502" rx="20" ry="25" fill="#c47d2e" opacity="0.95" transform="rotate(-25 780 502)"/>
<ellipse cx="771" cy="498" rx="7" ry="18" fill="#8c5722" opacity="0.5" transform="rotate(-20 771 498)"/>
<path d="M800 515C815 513 828 509 840 506C858 500 875 493 888 484" stroke="#bd772b" stroke-width="8" fill="none" opacity="0.85"/>
<path d="M795 527C815 523 835 519 850 515C868 509 882 502 893 493" stroke="#7c4c1f" stroke-width="4.500" fill="none" opacity="0.8"/>
<ellipse cx="746" cy="455" rx="9" ry="11" fill="#6a431e" opacity="0.8"/>
</g>
<g filter="url(#b1)" fill="none">
<ellipse cx="783" cy="331" rx="10.500" ry="14.500" fill="#ad6b28" stroke="#8c5722" stroke-width="2.600" opacity="0.8" transform="rotate(-18 783 331)"/>
<ellipse cx="783" cy="331" rx="6.500" ry="10" fill="#c07a2d" stroke="#8c5722" stroke-width="1.600" opacity="0.85" transform="rotate(-18 783 331)"/>
<ellipse cx="784.500" cy="331" rx="2.400" ry="5" fill="#7c4c1f" opacity="0.9" transform="rotate(-25 784.500 331)"/>
<path d="M770 314C776 300 791 300 798 315" stroke="#8c5722" stroke-width="3" opacity="0.75"/>
<ellipse cx="867" cy="355" rx="22" ry="15" fill="#ad6b28" stroke="#8c5722" stroke-width="3" opacity="0.75" transform="rotate(20 867 355)"/>
<ellipse cx="867" cy="355" rx="15.500" ry="10" fill="#c07a2d" stroke="#8c5722" stroke-width="1.800" opacity="0.85" transform="rotate(20 867 355)"/>
<ellipse cx="868" cy="355.500" rx="6" ry="3" fill="#7c4c1f" opacity="0.9" transform="rotate(30 868 355.500)"/>
<path d="M838 336C852 318 888 322 906 346" stroke="#7c4c1f" stroke-width="3.400" opacity="0.8"/>
<path d="M836 318C850 298 895 298 915 326" stroke="#8c5722" stroke-width="2.600" opacity="0.5"/>
<path d="M842 374C858 390 890 388 902 370" stroke="#8c5722" stroke-width="2.600" opacity="0.6"/>
<path d="M792 262C825 238 885 232 935 248" stroke="#8c5722" stroke-width="2.800" opacity="0.55"/>
<path d="M792 262C825 238 885 232 935 248" stroke="#d18a38" stroke-width="2.200" opacity="0.44000000000000006" transform="translate(1.500 3.500)"/>
<path d="M805 286C845 264 905 262 945 282" stroke="#8c5722" stroke-width="2.800" opacity="0.55"/>
<path d="M805 286C845 264 905 262 945 282" stroke="#d18a38" stroke-width="2.200" opacity="0.44000000000000006" transform="translate(1.500 3.500)"/>
<path d="M822 306C850 290 890 290 920 302" stroke="#8c5722" stroke-width="2.800" opacity="0.45"/>
<path d="M822 306C850 290 890 290 920 302" stroke="#d18a38" stroke-width="2.200" opacity="0.36000000000000004" transform="translate(1.500 3.500)"/>
<path d="M806 296C814 318 811 342 818 366" stroke="#8c5722" stroke-width="2.800" opacity="0.55"/>
<path d="M806 296C814 318 811 342 818 366" stroke="#d18a38" stroke-width="2.200" opacity="0.44000000000000006" transform="translate(1.500 3.500)"/>
<path d="M826 380C830 400 822 420 830 440" stroke="#8c5722" stroke-width="2.800" opacity="0.45"/>
<path d="M826 380C830 400 822 420 830 440" stroke="#d18a38" stroke-width="2.200" opacity="0.36000000000000004" transform="translate(1.500 3.500)"/>
<path d="M802 392C812 410 806 428 814 444" stroke="#8c5722" stroke-width="2.800" opacity="0.4"/>
<path d="M802 392C812 410 806 428 814 444" stroke="#d18a38" stroke-width="2.200" opacity="0.32000000000000006" transform="translate(1.500 3.500)"/>
<circle cx="808" cy="468" r="2.300" fill="#d18a38" opacity="0.8"/><circle cx="809.5" cy="470.0" r="1.600" fill="#7c4c1f" opacity="0.6"/>
<circle cx="820" cy="471" r="2.300" fill="#d18a38" opacity="0.8"/><circle cx="821.5" cy="473.0" r="1.600" fill="#7c4c1f" opacity="0.6"/>
<circle cx="833" cy="470" r="2.300" fill="#d18a38" opacity="0.8"/><circle cx="834.5" cy="472.0" r="1.600" fill="#7c4c1f" opacity="0.6"/>
<circle cx="814" cy="480" r="2.300" fill="#d18a38" opacity="0.8"/><circle cx="815.5" cy="482.0" r="1.600" fill="#7c4c1f" opacity="0.6"/>
<circle cx="828" cy="481" r="2.300" fill="#d18a38" opacity="0.8"/><circle cx="829.5" cy="483.0" r="1.600" fill="#7c4c1f" opacity="0.6"/>
<circle cx="842" cy="478" r="2.300" fill="#d18a38" opacity="0.8"/><circle cx="843.5" cy="480.0" r="1.600" fill="#7c4c1f" opacity="0.6"/>
<circle cx="800" cy="458" r="2.300" fill="#d18a38" opacity="0.8"/><circle cx="801.5" cy="460.0" r="1.600" fill="#7c4c1f" opacity="0.6"/>
<circle cx="852" cy="462" r="2.300" fill="#d18a38" opacity="0.8"/><circle cx="853.5" cy="464.0" r="1.600" fill="#7c4c1f" opacity="0.6"/>
<circle cx="795" cy="447" r="2.300" fill="#d18a38" opacity="0.8"/><circle cx="796.5" cy="449.0" r="1.600" fill="#7c4c1f" opacity="0.6"/>
<circle cx="838" cy="455" r="2.300" fill="#d18a38" opacity="0.8"/><circle cx="839.5" cy="457.0" r="1.600" fill="#7c4c1f" opacity="0.6"/>
</g>
<g filter="url(#b1)" fill="none" stroke-linecap="round"><path d="M882 634C883 639 881 643 878 646S873 654 874 659" stroke="#a5672a" stroke-width="4.8" opacity="0.58"/><path d="M885 635C886 640 885 644 882 647S877 656 878 660" stroke="#d18a38" stroke-width="3.6" opacity="0.51"/><path d="M813 517C810 525 811 534 816 540S822 556 818 564" stroke="#a5672a" stroke-width="3.3" opacity="0.60"/><path d="M815 518C812 526 813 535 818 541S824 557 820 565" stroke="#d18a38" stroke-width="2.5" opacity="0.53"/><path d="M823 522C819 529 819 536 822 542S825 556 822 561" stroke="#7c4c1f" stroke-width="5.0" opacity="0.79"/><path d="M826 524C823 530 823 537 826 543S828 557 825 563" stroke="#c88031" stroke-width="3.7" opacity="0.69"/><path d="M887 550C881 555 878 561 880 568S878 582 872 586" stroke="#7c4c1f" stroke-width="5.4" opacity="0.70"/><path d="M891 552C885 557 882 563 883 570S882 584 876 588" stroke="#c88031" stroke-width="4.1" opacity="0.62"/><path d="M856 535C853 542 852 548 853 554S853 568 850 573" stroke="#7c4c1f" stroke-width="5.0" opacity="0.65"/><path d="M859 537C856 543 855 550 857 556S857 569 854 574" stroke="#c88031" stroke-width="3.8" opacity="0.57"/><path d="M789 549C787 558 788 566 794 572S802 586 799 594" stroke="#8c5722" stroke-width="4.0" opacity="0.77"/><path d="M792 551C789 559 791 567 797 573S804 587 802 595" stroke="#d18a38" stroke-width="3.0" opacity="0.67"/><path d="M843 547C849 553 852 561 850 568S851 584 857 589" stroke="#a5672a" stroke-width="5.1" opacity="0.53"/><path d="M846 549C853 555 855 562 853 570S854 586 860 591" stroke="#d18a38" stroke-width="3.8" opacity="0.47"/><path d="M884 536C884 541 883 545 880 548S875 555 875 560" stroke="#8c5722" stroke-width="4.2" opacity="0.51"/><path d="M887 537C887 542 886 546 883 549S878 557 878 561" stroke="#c88031" stroke-width="3.2" opacity="0.45"/><path d="M887 616C880 620 878 626 881 633S880 648 874 651" stroke="#8c5722" stroke-width="6.0" opacity="0.57"/><path d="M891 617C885 622 882 628 885 635S885 649 878 653" stroke="#c88031" stroke-width="4.5" opacity="0.50"/><path d="M837 520C841 525 842 532 841 538S842 552 846 557" stroke="#a5672a" stroke-width="5.3" opacity="0.78"/><path d="M840 521C844 527 846 534 845 540S846 553 850 558" stroke="#d18a38" stroke-width="3.9" opacity="0.69"/><path d="M843 596C838 603 838 609 843 615S847 629 842 635" stroke="#8c5722" stroke-width="3.7" opacity="0.60"/><path d="M846 597C841 604 841 611 845 617S849 630 844 636" stroke="#c88031" stroke-width="2.8" opacity="0.53"/><path d="M865 597C869 602 869 607 866 611S863 621 867 625" stroke="#a5672a" stroke-width="4.9" opacity="0.47"/><path d="M868 599C872 603 873 608 869 613S866 623 870 627" stroke="#d18a38" stroke-width="3.6" opacity="0.42"/><path d="M842 568C847 576 848 583 847 591S848 607 852 614" stroke="#8c5722" stroke-width="4.8" opacity="0.74"/><path d="M846 570C850 577 852 585 850 592S851 609 855 615" stroke="#c88031" stroke-width="3.6" opacity="0.65"/><path d="M820 585C823 590 823 596 819 600S815 611 818 615" stroke="#8c5722" stroke-width="5.9" opacity="0.57"/><path d="M824 587C827 592 827 597 823 602S819 612 822 617" stroke="#c88031" stroke-width="4.4" opacity="0.50"/><path d="M810 585C813 591 814 597 813 603S814 615 817 620" stroke="#8c5722" stroke-width="5.2" opacity="0.57"/><path d="M813 587C816 592 818 598 817 604S818 617 821 622" stroke="#c88031" stroke-width="3.9" opacity="0.50"/><path d="M864 565C861 569 860 573 861 577S862 586 859 590" stroke="#a5672a" stroke-width="5.0" opacity="0.78"/><path d="M867 567C864 571 864 575 865 579S865 588 863 591" stroke="#d18a38" stroke-width="3.7" opacity="0.69"/><path d="M835 601C841 607 841 614 837 620S833 634 838 639" stroke="#8c5722" stroke-width="4.6" opacity="0.54"/><path d="M839 602C844 609 845 616 840 622S836 635 842 641" stroke="#d18a38" stroke-width="3.4" opacity="0.48"/><path d="M877 623C873 631 873 638 876 645S879 661 875 667" stroke="#a5672a" stroke-width="5.0" opacity="0.55"/><path d="M881 624C877 632 877 640 880 647S882 662 879 669" stroke="#d18a38" stroke-width="3.8" opacity="0.49"/><path d="M869 549C865 553 863 558 866 563S866 573 862 576" stroke="#a5672a" stroke-width="3.1" opacity="0.71"/><path d="M872 550C867 554 866 559 868 564S868 574 864 577" stroke="#d18a38" stroke-width="2.3" opacity="0.63"/><path d="M858 563C860 572 858 581 852 587S844 603 847 611" stroke="#8c5722" stroke-width="3.4" opacity="0.49"/><path d="M860 564C862 573 860 582 855 588S846 604 849 613" stroke="#d18a38" stroke-width="2.6" opacity="0.43"/><path d="M814 611C813 617 815 620 820 622S827 628 826 633" stroke="#8c5722" stroke-width="5.3" opacity="0.54"/><path d="M818 613C817 618 819 622 824 624S831 630 830 635" stroke="#c88031" stroke-width="4.0" opacity="0.47"/><path d="M789 616C789 622 791 628 796 631S803 641 803 647" stroke="#8c5722" stroke-width="3.4" opacity="0.51"/><path d="M792 617C791 623 794 629 798 632S806 642 805 648" stroke="#c88031" stroke-width="2.6" opacity="0.45"/><path d="M816 525C818 532 817 539 814 545S810 559 812 566" stroke="#8c5722" stroke-width="3.5" opacity="0.77"/><path d="M818 526C820 533 820 540 816 546S812 560 815 567" stroke="#c88031" stroke-width="2.6" opacity="0.67"/><path d="M799 600C803 606 802 612 799 616S795 627 798 632" stroke="#8c5722" stroke-width="5.7" opacity="0.65"/><path d="M803 602C807 608 806 613 803 618S799 629 802 634" stroke="#d18a38" stroke-width="4.3" opacity="0.57"/><path d="M848 589C847 594 848 599 851 602S854 612 853 616" stroke="#7c4c1f" stroke-width="3.3" opacity="0.52"/><path d="M851 590C849 595 850 600 853 603S857 613 855 617" stroke="#c88031" stroke-width="2.5" opacity="0.46"/><path d="M865 543C858 551 858 559 863 567S868 584 862 591" stroke="#7c4c1f" stroke-width="5.0" opacity="0.71"/><path d="M868 544C862 552 861 561 867 568S872 586 865 593" stroke="#c88031" stroke-width="3.7" opacity="0.62"/><path d="M833 597C830 604 828 611 829 617S829 632 826 637" stroke="#8c5722" stroke-width="4.1" opacity="0.74"/><path d="M836 599C832 605 831 612 832 619S832 633 829 639" stroke="#d18a38" stroke-width="3.1" opacity="0.65"/><path d="M822 541C820 546 820 551 823 555S825 565 823 569" stroke="#a5672a" stroke-width="3.9" opacity="0.47"/><path d="M825 542C823 548 823 552 825 557S828 566 826 571" stroke="#d18a38" stroke-width="3.0" opacity="0.42"/><path d="M835 535C836 541 836 547 832 552S827 563 829 568" stroke="#8c5722" stroke-width="5.9" opacity="0.68"/><path d="M839 537C841 543 840 549 836 553S831 564 833 570" stroke="#c88031" stroke-width="4.4" opacity="0.60"/><path d="M827 561C826 565 826 570 829 573S831 581 830 585" stroke="#a5672a" stroke-width="5.7" opacity="0.73"/><path d="M831 563C830 567 830 571 832 575S835 583 834 587" stroke="#d18a38" stroke-width="4.3" opacity="0.64"/><path d="M888 598C890 602 890 607 888 610S885 619 887 623" stroke="#a5672a" stroke-width="5.5" opacity="0.67"/><path d="M892 599C894 604 893 608 891 612S889 621 891 625" stroke="#d18a38" stroke-width="4.1" opacity="0.59"/><path d="M829 559C831 566 830 574 826 579S821 593 823 600" stroke="#8c5722" stroke-width="5.9" opacity="0.70"/><path d="M833 561C835 568 834 575 830 581S825 595 827 602" stroke="#d18a38" stroke-width="4.5" opacity="0.62"/><path d="M864 616C861 624 862 632 864 638S868 653 865 660" stroke="#a5672a" stroke-width="5.8" opacity="0.62"/><path d="M868 618C865 626 866 633 868 640S872 655 869 662" stroke="#d18a38" stroke-width="4.3" opacity="0.54"/><path d="M797 517C796 523 797 528 801 532S805 541 804 546" stroke="#8c5722" stroke-width="4.9" opacity="0.72"/><path d="M801 519C800 524 801 529 804 533S808 543 807 547" stroke="#d18a38" stroke-width="3.7" opacity="0.63"/><path d="M830 629C833 636 832 643 827 648S821 660 824 667" stroke="#8c5722" stroke-width="4.0" opacity="0.53"/><path d="M833 630C836 637 835 644 830 649S824 662 827 668" stroke="#c88031" stroke-width="3.0" opacity="0.47"/><path d="M792 613C798 619 802 626 803 634S808 650 814 655" stroke="#8c5722" stroke-width="5.1" opacity="0.79"/><path d="M795 614C802 620 806 628 806 635S812 652 818 657" stroke="#d18a38" stroke-width="3.8" opacity="0.69"/><path d="M872 635C871 642 873 648 877 653S883 664 882 670" stroke="#8c5722" stroke-width="5.8" opacity="0.63"/><path d="M876 637C875 644 877 650 881 655S887 666 886 672" stroke="#c88031" stroke-width="4.4" opacity="0.55"/><path d="M889 596C889 601 888 606 885 610S880 619 880 623" stroke="#8c5722" stroke-width="5.2" opacity="0.68"/><path d="M893 597C893 603 891 608 888 611S883 620 884 625" stroke="#c88031" stroke-width="3.9" opacity="0.60"/><path d="M836 607C833 612 832 617 834 622S835 633 832 637" stroke="#a5672a" stroke-width="5.8" opacity="0.72"/><path d="M840 609C837 614 836 619 838 624S839 635 836 639" stroke="#d18a38" stroke-width="4.3" opacity="0.63"/><path d="M869 595C867 603 868 611 874 616S881 631 878 638" stroke="#a5672a" stroke-width="4.1" opacity="0.45"/><path d="M872 596C869 604 871 612 876 618S884 632 881 639" stroke="#d18a38" stroke-width="3.0" opacity="0.40"/><path d="M819 599C823 607 823 614 821 622S820 638 823 644" stroke="#8c5722" stroke-width="3.6" opacity="0.50"/><path d="M822 600C825 608 826 616 824 623S822 639 826 645" stroke="#c88031" stroke-width="2.7" opacity="0.44"/><path d="M849 568C853 576 853 584 851 591S848 607 852 613" stroke="#7c4c1f" stroke-width="4.6" opacity="0.74"/><path d="M853 570C856 578 857 585 854 592S851 608 855 615" stroke="#c88031" stroke-width="3.4" opacity="0.65"/><path d="M871 605C866 612 863 620 864 628S862 644 857 650" stroke="#a5672a" stroke-width="3.4" opacity="0.58"/><path d="M874 606C868 613 866 621 867 629S865 645 859 651" stroke="#d18a38" stroke-width="2.5" opacity="0.51"/><path d="M888 611C891 616 892 621 891 626S891 637 893 641" stroke="#a5672a" stroke-width="4.1" opacity="0.61"/><path d="M891 612C894 617 895 622 894 627S894 638 896 642" stroke="#d18a38" stroke-width="3.1" opacity="0.54"/><path d="M820 585C822 590 821 595 818 599S815 607 816 612" stroke="#7c4c1f" stroke-width="3.4" opacity="0.47"/><path d="M823 586C824 591 823 596 821 600S817 608 819 613" stroke="#c88031" stroke-width="2.5" opacity="0.42"/><path d="M865 571C862 580 864 589 871 594S881 609 878 617" stroke="#7c4c1f" stroke-width="3.8" opacity="0.61"/><path d="M867 572C865 582 867 590 874 595S884 610 881 618" stroke="#c88031" stroke-width="2.8" opacity="0.54"/><path d="M817 615C821 623 820 631 815 637S808 652 813 660" stroke="#a5672a" stroke-width="3.3" opacity="0.58"/><path d="M819 616C823 624 822 632 817 638S811 653 815 661" stroke="#d18a38" stroke-width="2.5" opacity="0.51"/><path d="M844 596C844 601 846 605 849 608S853 616 853 620" stroke="#8c5722" stroke-width="5.8" opacity="0.69"/><path d="M848 598C849 602 850 607 853 610S857 617 857 621" stroke="#d18a38" stroke-width="4.3" opacity="0.61"/><path d="M884 594C880 598 878 602 880 607S880 618 875 620" stroke="#8c5722" stroke-width="3.9" opacity="0.63"/><path d="M887 595C882 599 881 603 883 608S883 619 878 622" stroke="#d18a38" stroke-width="2.9" opacity="0.56"/><path d="M856 537C862 544 863 551 860 558S858 574 863 579" stroke="#8c5722" stroke-width="5.2" opacity="0.76"/><path d="M860 539C866 545 867 553 863 560S861 575 867 581" stroke="#c88031" stroke-width="3.9" opacity="0.67"/><path d="M877 575C878 580 877 584 875 587S872 596 873 600" stroke="#8c5722" stroke-width="4.2" opacity="0.55"/><path d="M880 576C881 581 880 585 878 589S875 597 876 601" stroke="#c88031" stroke-width="3.2" opacity="0.48"/><path d="M880 561C883 570 880 578 873 582S863 596 866 604" stroke="#8c5722" stroke-width="4.8" opacity="0.54"/><path d="M883 562C886 571 884 579 876 584S866 597 870 606" stroke="#d18a38" stroke-width="3.6" opacity="0.48"/><path d="M857 638C853 642 852 646 853 651S853 661 850 664" stroke="#a5672a" stroke-width="5.2" opacity="0.57"/><path d="M861 639C857 643 856 648 857 653S857 663 853 666" stroke="#d18a38" stroke-width="3.9" opacity="0.50"/><path d="M874 521C876 527 877 533 875 538S874 549 876 554" stroke="#8c5722" stroke-width="5.4" opacity="0.47"/><path d="M878 523C880 529 880 534 879 539S877 550 879 555" stroke="#c88031" stroke-width="4.0" opacity="0.42"/><path d="M797 569C794 575 794 581 797 586S801 598 797 603" stroke="#8c5722" stroke-width="3.3" opacity="0.57"/><path d="M799 570C796 576 796 582 800 587S803 599 800 604" stroke="#d18a38" stroke-width="2.5" opacity="0.50"/><path d="M990 630C990 637 989 644 985 649S980 662 980 669" stroke="#8c5722" stroke-width="4.2" opacity="0.80"/><path d="M993 631C993 638 992 645 988 650S983 663 983 670" stroke="#d18a38" stroke-width="3.1" opacity="0.70"/><path d="M968 606C962 611 958 617 957 623S951 635 946 639" stroke="#8c5722" stroke-width="4.9" opacity="0.49"/><path d="M971 608C966 613 962 618 960 624S954 637 950 641" stroke="#c88031" stroke-width="3.7" opacity="0.44"/><path d="M990 607C990 613 988 618 984 622S979 631 979 636" stroke="#7c4c1f" stroke-width="5.7" opacity="0.70"/><path d="M994 609C994 615 992 620 988 623S983 633 983 638" stroke="#c88031" stroke-width="4.2" opacity="0.61"/><path d="M893 628C886 634 882 641 883 649S879 664 872 669" stroke="#8c5722" stroke-width="5.4" opacity="0.62"/><path d="M897 630C890 635 886 642 886 650S883 666 876 670" stroke="#d18a38" stroke-width="4.1" opacity="0.55"/><path d="M931 510C923 517 920 525 923 534S923 552 915 558" stroke="#a5672a" stroke-width="5.9" opacity="0.49"/><path d="M935 512C927 519 924 527 927 536S927 554 919 560" stroke="#d18a38" stroke-width="4.4" opacity="0.44"/><path d="M902 605C903 611 902 616 898 620S894 630 895 635" stroke="#8c5722" stroke-width="4.9" opacity="0.63"/><path d="M905 606C906 612 905 617 902 621S897 631 899 636" stroke="#d18a38" stroke-width="3.7" opacity="0.55"/><path d="M929 510C924 516 920 523 919 530S913 546 908 551" stroke="#8c5722" stroke-width="5.7" opacity="0.70"/><path d="M933 511C928 518 924 525 923 532S917 548 912 553" stroke="#c88031" stroke-width="4.3" opacity="0.62"/><path d="M885 566C885 574 883 582 878 587S871 601 872 608" stroke="#8c5722" stroke-width="4.7" opacity="0.76"/><path d="M888 567C889 576 886 583 881 588S874 602 875 609" stroke="#c88031" stroke-width="3.5" opacity="0.67"/><path d="M973 500C970 505 970 511 974 515S979 524 976 529" stroke="#7c4c1f" stroke-width="3.3" opacity="0.78"/><path d="M975 501C972 506 972 512 976 516S981 525 978 530" stroke="#c88031" stroke-width="2.4" opacity="0.68"/><path d="M943 554C938 562 936 569 937 577S935 593 931 599" stroke="#8c5722" stroke-width="3.1" opacity="0.64"/><path d="M946 555C941 562 938 570 939 578S938 594 933 600" stroke="#c88031" stroke-width="2.4" opacity="0.57"/><path d="M941 574C936 576 934 580 935 584S932 593 929 594" stroke="#8c5722" stroke-width="4.2" opacity="0.66"/><path d="M944 575C939 577 937 581 938 585S935 594 931 596" stroke="#d18a38" stroke-width="3.2" opacity="0.58"/><path d="M970 624C965 629 962 636 961 643S957 657 952 662" stroke="#7c4c1f" stroke-width="5.5" opacity="0.62"/><path d="M974 625C969 631 966 638 965 644S961 659 956 664" stroke="#c88031" stroke-width="4.1" opacity="0.55"/><path d="M981 585C974 593 972 601 976 610S977 629 970 635" stroke="#8c5722" stroke-width="4.9" opacity="0.55"/><path d="M985 587C977 594 975 603 979 612S981 630 974 637" stroke="#d18a38" stroke-width="3.7" opacity="0.49"/><path d="M909 616C914 625 913 633 906 640S898 656 903 664" stroke="#a5672a" stroke-width="4.2" opacity="0.69"/><path d="M912 617C917 626 916 635 909 641S901 657 906 665" stroke="#d18a38" stroke-width="3.1" opacity="0.61"/><path d="M950 615C946 619 945 624 947 629S948 640 944 644" stroke="#8c5722" stroke-width="5.1" opacity="0.61"/><path d="M953 616C949 621 948 626 950 631S952 642 948 645" stroke="#c88031" stroke-width="3.8" opacity="0.53"/><path d="M912 538C906 546 906 555 912 562S919 578 913 585" stroke="#8c5722" stroke-width="5.7" opacity="0.57"/><path d="M916 540C910 548 910 556 916 563S923 579 917 586" stroke="#c88031" stroke-width="4.3" opacity="0.50"/><path d="M887 592C886 597 882 602 878 605S870 612 869 617" stroke="#8c5722" stroke-width="3.5" opacity="0.50"/><path d="M890 593C888 598 885 603 881 606S873 613 872 618" stroke="#d18a38" stroke-width="2.6" opacity="0.45"/><path d="M978 536C972 543 969 551 969 559S966 577 960 583" stroke="#a5672a" stroke-width="4.4" opacity="0.46"/><path d="M981 537C975 544 972 552 972 561S969 578 963 584" stroke="#d18a38" stroke-width="3.3" opacity="0.41"/><path d="M908 513C903 519 903 525 906 531S909 544 905 549" stroke="#a5672a" stroke-width="5.8" opacity="0.52"/><path d="M912 514C907 520 907 527 910 533S913 546 909 551" stroke="#d18a38" stroke-width="4.3" opacity="0.46"/><path d="M972 548C968 553 968 559 972 564S975 576 971 581" stroke="#a5672a" stroke-width="5.4" opacity="0.57"/><path d="M975 549C972 555 972 561 975 566S979 578 975 583" stroke="#d18a38" stroke-width="4.0" opacity="0.50"/><path d="M995 582C999 592 997 600 990 606S981 621 985 629" stroke="#a5672a" stroke-width="3.0" opacity="0.55"/><path d="M997 583C1001 593 999 601 992 607S983 622 987 630" stroke="#d18a38" stroke-width="2.3" opacity="0.49"/><path d="M904 505C908 512 909 520 907 527S906 543 910 550" stroke="#8c5722" stroke-width="5.3" opacity="0.48"/><path d="M908 506C911 514 912 522 911 529S910 545 913 551" stroke="#d18a38" stroke-width="4.0" opacity="0.42"/><path d="M903 559C904 565 903 571 900 575S896 586 897 591" stroke="#7c4c1f" stroke-width="5.1" opacity="0.58"/><path d="M907 561C908 567 907 572 904 577S900 588 901 593" stroke="#c88031" stroke-width="3.8" opacity="0.51"/><path d="M993 503C991 508 990 513 992 518S994 529 992 534" stroke="#a5672a" stroke-width="3.9" opacity="0.77"/><path d="M996 504C993 509 993 515 995 520S997 531 994 535" stroke="#d18a38" stroke-width="3.0" opacity="0.67"/><path d="M944 520C940 529 940 537 944 544S948 561 944 568" stroke="#a5672a" stroke-width="5.0" opacity="0.67"/><path d="M948 522C944 530 944 539 948 546S951 563 947 570" stroke="#d18a38" stroke-width="3.8" opacity="0.59"/><path d="M917 610C919 618 917 624 911 628S903 639 905 645" stroke="#8c5722" stroke-width="4.8" opacity="0.66"/><path d="M920 612C922 619 920 625 914 629S906 640 909 647" stroke="#c88031" stroke-width="3.6" opacity="0.58"/><path d="M916 573C911 580 911 586 916 591S920 604 915 609" stroke="#8c5722" stroke-width="6.0" opacity="0.59"/><path d="M920 575C915 581 915 588 920 593S924 606 920 611" stroke="#d18a38" stroke-width="4.5" opacity="0.52"/><path d="M972 518C974 524 974 529 971 533S968 543 969 548" stroke="#a5672a" stroke-width="4.2" opacity="0.78"/><path d="M975 520C977 525 977 530 974 534S970 545 972 549" stroke="#d18a38" stroke-width="3.1" opacity="0.69"/><path d="M894 592C895 598 894 604 892 609S888 621 890 626" stroke="#a5672a" stroke-width="3.1" opacity="0.67"/><path d="M896 593C897 599 897 605 894 610S891 622 892 627" stroke="#d18a38" stroke-width="2.3" opacity="0.59"/><path d="M964 483C968 489 968 494 965 499S962 509 965 514" stroke="#8c5722" stroke-width="3.1" opacity="0.58"/><path d="M967 484C970 490 970 495 967 500S964 510 967 515" stroke="#d18a38" stroke-width="2.3" opacity="0.51"/><path d="M937 608C929 614 926 621 928 630S927 647 920 652" stroke="#a5672a" stroke-width="4.2" opacity="0.71"/><path d="M940 609C932 615 929 623 931 631S930 648 923 653" stroke="#d18a38" stroke-width="3.2" opacity="0.62"/><path d="M923 625C926 632 925 638 921 643S915 654 918 660" stroke="#8c5722" stroke-width="5.7" opacity="0.57"/><path d="M927 627C930 634 929 640 925 644S919 656 922 662" stroke="#c88031" stroke-width="4.2" opacity="0.51"/><path d="M912 582C905 588 902 596 902 604S899 620 892 625" stroke="#7c4c1f" stroke-width="4.5" opacity="0.78"/><path d="M915 583C908 589 905 597 905 605S902 622 895 627" stroke="#c88031" stroke-width="3.4" opacity="0.68"/><path d="M954 529C950 533 947 538 946 543S941 554 937 558" stroke="#8c5722" stroke-width="5.4" opacity="0.74"/><path d="M958 530C953 535 950 540 949 545S945 556 941 559" stroke="#d18a38" stroke-width="4.0" opacity="0.65"/><path d="M925 546C919 551 917 557 918 564S916 577 911 581" stroke="#8c5722" stroke-width="3.5" opacity="0.63"/><path d="M927 547C922 552 919 558 920 565S919 578 913 582" stroke="#c88031" stroke-width="2.6" opacity="0.55"/><path d="M961 560C961 566 959 570 955 572S947 579 948 584" stroke="#a5672a" stroke-width="5.5" opacity="0.55"/><path d="M965 562C965 567 963 572 958 574S951 581 952 586" stroke="#d18a38" stroke-width="4.1" opacity="0.49"/><path d="M921 568C920 575 918 581 913 586S906 597 906 604" stroke="#a5672a" stroke-width="3.4" opacity="0.52"/><path d="M923 569C923 576 920 582 916 587S908 598 908 605" stroke="#d18a38" stroke-width="2.5" opacity="0.46"/><path d="M934 524C929 530 929 537 933 542S936 556 932 561" stroke="#8c5722" stroke-width="5.3" opacity="0.49"/><path d="M937 525C933 532 932 538 936 544S940 557 935 563" stroke="#c88031" stroke-width="4.0" opacity="0.43"/><path d="M987 575C988 584 986 593 981 600S975 617 976 625" stroke="#8c5722" stroke-width="5.0" opacity="0.74"/><path d="M991 576C991 586 989 594 985 601S978 618 979 626" stroke="#d18a38" stroke-width="3.8" opacity="0.65"/><path d="M971 562C964 569 962 576 965 583S967 599 960 604" stroke="#a5672a" stroke-width="3.0" opacity="0.59"/><path d="M973 563C966 569 964 577 968 584S969 600 962 605" stroke="#d18a38" stroke-width="2.3" opacity="0.52"/><path d="M918 565C918 573 915 580 910 585S901 598 901 606" stroke="#8c5722" stroke-width="4.4" opacity="0.46"/><path d="M921 566C921 575 918 582 913 587S904 600 905 607" stroke="#c88031" stroke-width="3.3" opacity="0.40"/><path d="M939 533C939 543 935 549 928 553S916 564 917 572" stroke="#7c4c1f" stroke-width="3.0" opacity="0.76"/><path d="M941 534C942 544 938 550 930 554S918 564 919 573" stroke="#c88031" stroke-width="2.3" opacity="0.67"/><path d="M887 620C880 621 877 625 877 631S872 642 867 643" stroke="#7c4c1f" stroke-width="5.0" opacity="0.68"/><path d="M890 621C884 623 880 627 880 633S876 643 870 644" stroke="#c88031" stroke-width="3.7" opacity="0.60"/><path d="M913 548C909 553 909 559 913 563S918 574 914 578" stroke="#7c4c1f" stroke-width="6.0" opacity="0.57"/><path d="M917 550C913 555 914 561 918 565S922 576 918 580" stroke="#c88031" stroke-width="4.5" opacity="0.50"/><path d="M909 492C913 500 913 509 908 516S903 533 908 541" stroke="#7c4c1f" stroke-width="3.1" opacity="0.76"/><path d="M911 493C915 501 915 510 910 517S905 534 910 542" stroke="#c88031" stroke-width="2.3" opacity="0.67"/><path d="M896 542C894 546 894 550 896 554S897 564 895 567" stroke="#8c5722" stroke-width="3.4" opacity="0.76"/><path d="M899 543C897 547 897 551 898 555S900 565 898 568" stroke="#c88031" stroke-width="2.5" opacity="0.66"/><path d="M958 594C959 600 958 606 954 610S949 621 950 626" stroke="#7c4c1f" stroke-width="4.2" opacity="0.55"/><path d="M961 595C962 602 961 607 957 611S952 622 953 627" stroke="#c88031" stroke-width="3.2" opacity="0.49"/><path d="M986 610C987 616 985 621 981 624S974 632 975 637" stroke="#a5672a" stroke-width="5.6" opacity="0.49"/><path d="M990 612C991 618 989 623 985 625S978 634 979 639" stroke="#d18a38" stroke-width="4.2" opacity="0.44"/><path d="M882 619C874 623 869 630 868 639S863 656 855 659" stroke="#8c5722" stroke-width="5.6" opacity="0.63"/><path d="M886 621C878 625 873 632 872 641S866 657 858 661" stroke="#d18a38" stroke-width="4.2" opacity="0.55"/><path d="M950 537C950 543 947 548 943 552S936 561 936 566" stroke="#8c5722" stroke-width="4.7" opacity="0.79"/><path d="M953 538C953 545 951 550 946 553S939 562 939 568" stroke="#c88031" stroke-width="3.5" opacity="0.69"/><path d="M923 536C915 540 911 547 911 555S908 571 900 574" stroke="#a5672a" stroke-width="3.5" opacity="0.61"/><path d="M925 537C917 541 913 548 914 556S910 572 903 575" stroke="#d18a38" stroke-width="2.6" opacity="0.54"/><path d="M913 622C906 626 903 632 904 639S902 654 895 657" stroke="#a5672a" stroke-width="5.1" opacity="0.51"/><path d="M917 623C910 627 906 633 908 641S905 655 899 658" stroke="#d18a38" stroke-width="3.8" opacity="0.45"/><path d="M985 505C980 510 978 516 981 522S982 534 977 538" stroke="#a5672a" stroke-width="4.8" opacity="0.59"/><path d="M988 507C983 512 982 517 984 523S985 535 980 540" stroke="#d18a38" stroke-width="3.6" opacity="0.52"/><path d="M983 562C985 567 985 572 982 576S979 585 981 590" stroke="#8c5722" stroke-width="5.2" opacity="0.55"/><path d="M987 564C989 569 988 574 985 578S982 587 984 591" stroke="#c88031" stroke-width="3.9" opacity="0.48"/><path d="M899 549C895 556 896 562 900 567S905 579 901 584" stroke="#8c5722" stroke-width="3.5" opacity="0.51"/><path d="M902 550C898 557 898 563 903 568S907 580 904 585" stroke="#c88031" stroke-width="2.7" opacity="0.45"/><path d="M893 482C895 490 893 497 888 502S880 514 882 521" stroke="#8c5722" stroke-width="4.5" opacity="0.80"/><path d="M896 484C898 492 896 498 891 503S883 516 885 523" stroke="#d18a38" stroke-width="3.4" opacity="0.70"/><path d="M993 554C990 557 988 562 989 566S987 575 984 578" stroke="#8c5722" stroke-width="5.2" opacity="0.75"/><path d="M997 555C994 559 992 563 992 568S990 577 988 580" stroke="#c88031" stroke-width="3.9" opacity="0.66"/><path d="M905 568C901 573 899 580 899 586S897 600 893 605" stroke="#8c5722" stroke-width="4.0" opacity="0.48"/><path d="M908 569C904 575 902 581 902 587S900 601 896 606" stroke="#d18a38" stroke-width="3.0" opacity="0.42"/><path d="M953 520C949 525 948 532 950 538S951 551 947 556" stroke="#8c5722" stroke-width="3.3" opacity="0.75"/><path d="M956 521C952 526 951 533 952 539S953 552 949 557" stroke="#d18a38" stroke-width="2.5" opacity="0.66"/><path d="M958 573C957 579 955 584 951 588S944 597 943 603" stroke="#8c5722" stroke-width="4.0" opacity="0.70"/><path d="M961 574C960 580 957 586 953 589S946 598 946 604" stroke="#d18a38" stroke-width="3.0" opacity="0.61"/><path d="M945 509C947 513 948 517 946 521S944 530 947 533" stroke="#7c4c1f" stroke-width="3.6" opacity="0.61"/><path d="M947 510C950 514 950 518 948 522S947 531 949 534" stroke="#c88031" stroke-width="2.7" opacity="0.53"/><path d="M944 577C946 582 945 586 941 589S935 597 937 602" stroke="#7c4c1f" stroke-width="5.2" opacity="0.56"/><path d="M948 578C950 583 948 588 944 591S939 599 941 603" stroke="#c88031" stroke-width="3.9" opacity="0.49"/><path d="M965 505C966 511 965 517 963 522S960 534 961 539" stroke="#7c4c1f" stroke-width="4.6" opacity="0.67"/><path d="M968 506C969 512 969 518 966 523S963 535 965 541" stroke="#c88031" stroke-width="3.5" opacity="0.59"/><path d="M959 544C960 550 958 555 954 558S948 566 949 571" stroke="#8c5722" stroke-width="3.7" opacity="0.48"/><path d="M962 545C962 551 961 556 957 559S951 567 952 572" stroke="#c88031" stroke-width="2.8" opacity="0.42"/><path d="M933 619C934 627 932 632 926 635S918 645 919 652" stroke="#8c5722" stroke-width="4.1" opacity="0.48"/><path d="M936 621C937 628 935 633 929 637S920 646 922 653" stroke="#d18a38" stroke-width="3.0" opacity="0.43"/><path d="M892 587C884 591 881 597 882 604S880 619 873 622" stroke="#a5672a" stroke-width="5.6" opacity="0.69"/><path d="M896 588C888 592 885 598 886 606S884 621 876 624" stroke="#d18a38" stroke-width="4.2" opacity="0.61"/><path d="M977 572C979 577 979 581 975 584S970 592 973 596" stroke="#8c5722" stroke-width="5.1" opacity="0.47"/><path d="M981 574C983 578 982 583 979 586S974 594 976 598" stroke="#c88031" stroke-width="3.8" opacity="0.42"/><path d="M950 583C949 591 947 597 942 602S934 614 934 621" stroke="#7c4c1f" stroke-width="5.9" opacity="0.68"/><path d="M954 585C953 592 951 599 946 604S938 616 938 623" stroke="#c88031" stroke-width="4.4" opacity="0.60"/><path d="M936 490C933 493 931 497 931 501S929 510 927 513" stroke="#8c5722" stroke-width="3.6" opacity="0.46"/><path d="M938 491C935 494 934 498 934 502S932 511 929 514" stroke="#c88031" stroke-width="2.7" opacity="0.41"/><path d="M969 601C969 609 967 617 962 623S955 638 955 646" stroke="#8c5722" stroke-width="3.5" opacity="0.54"/><path d="M972 602C971 610 969 618 965 624S958 639 958 647" stroke="#d18a38" stroke-width="2.6" opacity="0.48"/><path d="M1055 520C1049 524 1047 529 1047 535S1045 548 1039 551" stroke="#8c5722" stroke-width="4.3" opacity="0.77"/><path d="M1058 521C1052 525 1050 530 1050 537S1048 549 1042 552" stroke="#d18a38" stroke-width="3.2" opacity="0.68"/><path d="M1070 584C1064 587 1061 591 1061 598S1056 609 1051 611" stroke="#a5672a" stroke-width="3.9" opacity="0.74"/><path d="M1073 585C1067 588 1063 593 1063 599S1059 610 1053 612" stroke="#d18a38" stroke-width="2.9" opacity="0.65"/><path d="M1033 519C1025 522 1020 528 1020 536S1014 551 1007 553" stroke="#a5672a" stroke-width="5.5" opacity="0.76"/><path d="M1037 521C1029 524 1024 530 1024 538S1018 552 1011 554" stroke="#d18a38" stroke-width="4.1" opacity="0.67"/><path d="M1024 531C1022 535 1019 537 1015 538S1007 541 1006 545" stroke="#8c5722" stroke-width="3.0" opacity="0.75"/><path d="M1026 531C1024 536 1021 538 1017 539S1009 542 1008 546" stroke="#c88031" stroke-width="2.3" opacity="0.66"/><path d="M986 569C980 574 975 581 974 588S967 602 961 606" stroke="#a5672a" stroke-width="5.6" opacity="0.57"/><path d="M990 571C984 576 979 582 978 589S971 604 965 608" stroke="#d18a38" stroke-width="4.2" opacity="0.50"/><path d="M1030 481C1027 488 1023 494 1017 498S1006 509 1005 516" stroke="#7c4c1f" stroke-width="6.0" opacity="0.48"/><path d="M1034 482C1032 490 1027 496 1021 500S1010 511 1009 518" stroke="#c88031" stroke-width="4.5" opacity="0.42"/><path d="M992 483C989 492 984 498 977 500S963 509 962 517" stroke="#a5672a" stroke-width="3.0" opacity="0.56"/><path d="M994 484C992 493 986 499 979 501S965 510 964 518" stroke="#d18a38" stroke-width="2.3" opacity="0.50"/><path d="M1021 510C1020 515 1018 518 1014 520S1007 525 1007 529" stroke="#8c5722" stroke-width="5.3" opacity="0.71"/><path d="M1025 512C1024 516 1021 520 1017 521S1011 526 1010 531" stroke="#c88031" stroke-width="4.0" opacity="0.63"/><path d="M1063 600C1055 603 1051 608 1050 615S1044 629 1037 631" stroke="#a5672a" stroke-width="5.5" opacity="0.62"/><path d="M1066 601C1059 604 1054 610 1054 617S1048 631 1041 633" stroke="#d18a38" stroke-width="4.1" opacity="0.54"/><path d="M1063 492C1064 499 1061 505 1056 508S1047 519 1049 525" stroke="#a5672a" stroke-width="5.2" opacity="0.72"/><path d="M1066 493C1067 501 1065 506 1059 510S1051 520 1052 527" stroke="#d18a38" stroke-width="3.9" opacity="0.63"/><path d="M1066 593C1061 598 1058 604 1059 611S1056 625 1051 629" stroke="#7c4c1f" stroke-width="3.3" opacity="0.59"/><path d="M1069 594C1063 599 1060 605 1061 612S1058 626 1053 630" stroke="#c88031" stroke-width="2.4" opacity="0.52"/><path d="M1048 536C1041 539 1037 545 1036 551S1031 564 1025 567" stroke="#a5672a" stroke-width="5.5" opacity="0.69"/><path d="M1051 537C1045 541 1041 546 1040 553S1034 565 1028 568" stroke="#d18a38" stroke-width="4.1" opacity="0.61"/><path d="M1002 595C998 597 995 600 994 604S989 612 985 613" stroke="#a5672a" stroke-width="4.0" opacity="0.46"/><path d="M1005 596C1001 598 998 601 997 605S992 613 988 615" stroke="#d18a38" stroke-width="3.0" opacity="0.41"/><path d="M1015 564C1007 568 1003 574 1003 582S999 598 992 601" stroke="#8c5722" stroke-width="4.5" opacity="0.65"/><path d="M1018 565C1010 569 1006 576 1007 584S1003 599 995 602" stroke="#c88031" stroke-width="3.4" opacity="0.57"/><path d="M1023 543C1018 545 1013 549 1012 554S1005 563 1000 565" stroke="#a5672a" stroke-width="4.4" opacity="0.61"/><path d="M1027 545C1021 546 1016 550 1015 555S1008 565 1003 566" stroke="#d18a38" stroke-width="3.3" opacity="0.54"/><path d="M1014 488C1014 493 1012 497 1010 500S1005 508 1005 512" stroke="#8c5722" stroke-width="3.3" opacity="0.70"/><path d="M1016 489C1016 494 1015 498 1012 501S1007 509 1008 513" stroke="#d18a38" stroke-width="2.4" opacity="0.61"/><path d="M1047 592C1038 595 1033 601 1032 609S1026 624 1018 626" stroke="#8c5722" stroke-width="5.4" opacity="0.66"/><path d="M1051 593C1042 596 1037 602 1036 610S1029 625 1022 628" stroke="#c88031" stroke-width="4.1" opacity="0.58"/><path d="M1008 543C1008 548 1007 552 1003 555S997 562 998 567" stroke="#a5672a" stroke-width="4.9" opacity="0.66"/><path d="M1011 544C1012 549 1010 554 1006 556S1000 563 1001 568" stroke="#d18a38" stroke-width="3.6" opacity="0.58"/><path d="M1024 491C1020 495 1018 500 1019 504S1019 514 1015 517" stroke="#8c5722" stroke-width="3.9" opacity="0.61"/><path d="M1026 493C1023 496 1021 501 1022 506S1021 515 1018 519" stroke="#d18a38" stroke-width="2.9" opacity="0.54"/><path d="M1074 504C1070 508 1068 513 1068 518S1065 529 1061 532" stroke="#7c4c1f" stroke-width="4.7" opacity="0.65"/><path d="M1077 505C1073 510 1071 515 1071 520S1068 530 1065 534" stroke="#c88031" stroke-width="3.5" opacity="0.57"/><path d="M990 502C983 506 979 512 979 519S975 533 968 536" stroke="#8c5722" stroke-width="6.0" opacity="0.60"/><path d="M995 504C988 508 984 514 983 521S979 535 972 538" stroke="#c88031" stroke-width="4.5" opacity="0.53"/><path d="M1061 482C1060 490 1055 495 1048 496S1036 503 1035 511" stroke="#a5672a" stroke-width="5.7" opacity="0.75"/><path d="M1065 483C1064 491 1059 496 1052 498S1040 505 1039 513" stroke="#d18a38" stroke-width="4.3" opacity="0.66"/><path d="M1002 585C995 588 989 593 988 601S980 614 973 616" stroke="#8c5722" stroke-width="4.0" opacity="0.46"/><path d="M1005 587C997 589 992 595 991 602S983 615 976 617" stroke="#d18a38" stroke-width="3.0" opacity="0.40"/><path d="M1007 595C1008 603 1006 611 1001 616S993 629 994 637" stroke="#7c4c1f" stroke-width="4.8" opacity="0.80"/><path d="M1011 596C1012 605 1009 612 1004 617S996 631 997 638" stroke="#c88031" stroke-width="3.6" opacity="0.70"/><path d="M1037 555C1030 559 1027 565 1029 572S1027 585 1021 588" stroke="#8c5722" stroke-width="3.5" opacity="0.71"/><path d="M1039 556C1032 560 1030 566 1031 573S1030 586 1023 589" stroke="#c88031" stroke-width="2.6" opacity="0.62"/><path d="M1005 589C999 594 996 600 996 607S993 620 987 624" stroke="#7c4c1f" stroke-width="4.0" opacity="0.58"/><path d="M1008 591C1002 595 999 601 999 608S996 622 990 625" stroke="#c88031" stroke-width="3.0" opacity="0.51"/><path d="M1073 588C1066 593 1062 599 1062 607S1058 623 1050 627" stroke="#7c4c1f" stroke-width="5.8" opacity="0.68"/><path d="M1077 590C1070 594 1066 601 1066 609S1062 625 1054 629" stroke="#c88031" stroke-width="4.4" opacity="0.60"/><path d="M1016 517C1011 521 1008 527 1008 533S1006 546 1001 549" stroke="#8c5722" stroke-width="3.7" opacity="0.48"/><path d="M1019 518C1013 522 1010 528 1011 534S1008 547 1003 550" stroke="#d18a38" stroke-width="2.7" opacity="0.43"/><path d="M1055 514C1049 515 1046 517 1045 522S1040 530 1035 530" stroke="#7c4c1f" stroke-width="3.1" opacity="0.63"/><path d="M1057 515C1052 516 1048 518 1047 523S1042 531 1037 531" stroke="#c88031" stroke-width="2.3" opacity="0.55"/><path d="M1021 570C1021 576 1017 579 1012 580S1003 585 1003 591" stroke="#8c5722" stroke-width="5.6" opacity="0.55"/><path d="M1025 571C1024 577 1021 581 1016 582S1007 587 1007 592" stroke="#d18a38" stroke-width="4.2" opacity="0.49"/><path d="M1053 549C1053 555 1050 559 1046 560S1038 566 1038 571" stroke="#8c5722" stroke-width="3.2" opacity="0.50"/><path d="M1055 550C1055 556 1053 560 1048 561S1040 567 1040 572" stroke="#d18a38" stroke-width="2.4" opacity="0.44"/><path d="M1022 489C1016 495 1013 502 1012 509S1008 524 1003 529" stroke="#a5672a" stroke-width="3.4" opacity="0.75"/><path d="M1024 490C1018 496 1015 503 1015 510S1011 525 1006 530" stroke="#d18a38" stroke-width="2.5" opacity="0.66"/><path d="M1065 561C1066 569 1063 575 1057 578S1047 589 1049 596" stroke="#8c5722" stroke-width="5.7" opacity="0.61"/><path d="M1069 563C1070 571 1067 577 1061 580S1051 590 1053 597" stroke="#c88031" stroke-width="4.3" opacity="0.54"/><path d="M1004 550C1002 557 998 564 993 567S982 578 982 585" stroke="#8c5722" stroke-width="4.0" opacity="0.74"/><path d="M1007 551C1005 559 1001 565 995 568S985 579 984 586" stroke="#c88031" stroke-width="3.0" opacity="0.65"/><path d="M1021 508C1016 511 1014 516 1013 521S1010 531 1005 534" stroke="#8c5722" stroke-width="3.9" opacity="0.65"/><path d="M1024 509C1019 512 1016 517 1016 522S1012 533 1008 535" stroke="#d18a38" stroke-width="3.0" opacity="0.57"/><path d="M1031 543C1029 549 1026 554 1022 557S1014 565 1013 570" stroke="#8c5722" stroke-width="3.6" opacity="0.77"/><path d="M1033 544C1032 550 1029 555 1024 558S1016 566 1015 572" stroke="#d18a38" stroke-width="2.7" opacity="0.68"/><path d="M1012 591C1007 592 1004 595 1003 600S1000 608 995 609" stroke="#8c5722" stroke-width="4.5" opacity="0.71"/><path d="M1015 593C1010 594 1007 597 1007 601S1003 609 998 610" stroke="#d18a38" stroke-width="3.4" opacity="0.62"/><path d="M1039 523C1038 528 1035 531 1031 532S1023 537 1023 542" stroke="#a5672a" stroke-width="4.6" opacity="0.50"/><path d="M1042 525C1042 530 1039 533 1034 534S1026 539 1026 543" stroke="#d18a38" stroke-width="3.4" opacity="0.44"/><path d="M1056 543C1052 546 1050 550 1050 555S1048 564 1044 566" stroke="#8c5722" stroke-width="5.4" opacity="0.54"/><path d="M1060 545C1056 548 1054 552 1054 556S1052 565 1048 568" stroke="#c88031" stroke-width="4.1" opacity="0.48"/><path d="M1016 596C1012 599 1011 604 1011 608S1009 618 1006 620" stroke="#8c5722" stroke-width="3.0" opacity="0.74"/><path d="M1018 597C1014 600 1013 605 1013 609S1012 618 1008 621" stroke="#d18a38" stroke-width="2.3" opacity="0.65"/><path d="M1047 593C1048 601 1046 607 1039 610S1030 620 1032 627" stroke="#7c4c1f" stroke-width="5.9" opacity="0.52"/><path d="M1051 595C1052 603 1050 609 1044 612S1034 622 1036 629" stroke="#c88031" stroke-width="4.4" opacity="0.46"/><path d="M1033 524C1031 530 1026 533 1021 534S1011 538 1009 543" stroke="#8c5722" stroke-width="4.8" opacity="0.63"/><path d="M1037 526C1034 531 1030 534 1025 535S1015 540 1013 545" stroke="#d18a38" stroke-width="3.6" opacity="0.55"/><path d="M999 497C994 499 991 503 989 508S984 517 979 518" stroke="#a5672a" stroke-width="3.7" opacity="0.75"/><path d="M1002 498C997 500 993 504 992 509S986 518 982 519" stroke="#d18a38" stroke-width="2.8" opacity="0.66"/><path d="M1026 591C1021 594 1019 598 1018 603S1015 614 1011 616" stroke="#7c4c1f" stroke-width="3.9" opacity="0.56"/><path d="M1028 592C1024 595 1021 600 1021 605S1018 615 1014 617" stroke="#c88031" stroke-width="2.9" opacity="0.49"/><path d="M1024 522C1025 529 1022 535 1017 538S1010 548 1011 555" stroke="#a5672a" stroke-width="3.0" opacity="0.63"/><path d="M1026 523C1027 530 1025 535 1020 539S1012 549 1013 556" stroke="#d18a38" stroke-width="2.3" opacity="0.56"/><path d="M1043 598C1044 605 1042 610 1036 614S1028 623 1030 630" stroke="#7c4c1f" stroke-width="4.8" opacity="0.74"/><path d="M1046 599C1048 606 1045 612 1040 615S1031 625 1033 631" stroke="#c88031" stroke-width="3.6" opacity="0.65"/><path d="M1069 465C1066 469 1065 472 1066 476S1065 485 1062 488" stroke="#a5672a" stroke-width="2.9" opacity="0.65"/><path d="M1071 466C1068 469 1067 473 1068 477S1067 486 1064 489" stroke="#d18a38" stroke-width="2.2" opacity="0.57"/><path d="M1057 451C1056 455 1054 458 1050 459S1045 463 1044 467" stroke="#7c4c1f" stroke-width="3.7" opacity="0.61"/><path d="M1059 452C1058 456 1056 459 1053 460S1047 464 1047 468" stroke="#c88031" stroke-width="2.8" opacity="0.53"/><path d="M1071 451C1071 454 1070 457 1067 459S1063 464 1064 468" stroke="#8c5722" stroke-width="4.1" opacity="0.53"/><path d="M1074 452C1074 456 1073 459 1070 460S1066 466 1066 469" stroke="#c88031" stroke-width="3.1" opacity="0.47"/><path d="M1065 459C1066 463 1065 467 1062 470S1058 477 1060 481" stroke="#7c4c1f" stroke-width="2.7" opacity="0.60"/><path d="M1066 460C1068 464 1067 468 1064 471S1060 478 1062 482" stroke="#c88031" stroke-width="2.1" opacity="0.53"/><path d="M1072 439C1070 443 1068 447 1069 451S1069 460 1066 463" stroke="#7c4c1f" stroke-width="3.9" opacity="0.45"/><path d="M1075 440C1072 444 1071 448 1072 452S1071 461 1069 464" stroke="#c88031" stroke-width="2.9" opacity="0.40"/><path d="M1081 434C1082 439 1080 443 1076 445S1069 451 1070 455" stroke="#a5672a" stroke-width="2.6" opacity="0.63"/><path d="M1083 434C1084 440 1082 443 1077 445S1071 452 1072 456" stroke="#d18a38" stroke-width="2.0" opacity="0.55"/><path d="M1080 470C1077 474 1077 478 1078 481S1079 490 1077 493" stroke="#8c5722" stroke-width="3.9" opacity="0.77"/><path d="M1083 471C1080 475 1079 479 1081 483S1082 491 1080 494" stroke="#c88031" stroke-width="2.9" opacity="0.67"/><path d="M1065 466C1064 470 1062 472 1060 474S1055 478 1054 481" stroke="#a5672a" stroke-width="3.7" opacity="0.46"/><path d="M1068 468C1067 471 1065 473 1062 475S1058 479 1057 482" stroke="#d18a38" stroke-width="2.8" opacity="0.41"/><path d="M1068 448C1065 451 1063 454 1063 458S1062 466 1059 468" stroke="#a5672a" stroke-width="4.0" opacity="0.51"/><path d="M1070 449C1067 452 1066 455 1066 459S1064 467 1062 469" stroke="#d18a38" stroke-width="3.0" opacity="0.45"/><path d="M1075 446C1076 450 1075 453 1074 456S1071 462 1072 465" stroke="#7c4c1f" stroke-width="4.1" opacity="0.74"/><path d="M1078 447C1079 451 1078 454 1076 457S1074 463 1075 466" stroke="#c88031" stroke-width="3.0" opacity="0.65"/><path d="M907 525C910 531 915 534 921 533S932 535 934 541" stroke="#7c4c1f" stroke-width="4.5" opacity="0.76"/><path d="M910 526C913 533 918 535 924 534S935 536 938 542" stroke="#c88031" stroke-width="3.4" opacity="0.66"/><path d="M910 524C913 527 917 529 921 530S930 533 933 536" stroke="#a5672a" stroke-width="4.3" opacity="0.77"/><path d="M913 525C916 529 920 531 924 531S933 534 936 537" stroke="#d18a38" stroke-width="3.2" opacity="0.68"/><path d="M867 518C872 519 877 522 880 527S888 535 893 535" stroke="#a5672a" stroke-width="3.4" opacity="0.67"/><path d="M869 519C875 520 880 523 882 528S890 536 896 536" stroke="#d18a38" stroke-width="2.6" opacity="0.59"/><path d="M926 511C931 508 936 508 941 511S951 514 956 511" stroke="#a5672a" stroke-width="3.3" opacity="0.60"/><path d="M928 512C933 509 939 509 943 512S954 515 958 512" stroke="#d18a38" stroke-width="2.5" opacity="0.53"/><path d="M834 505C840 503 845 504 849 507S858 511 863 509" stroke="#8c5722" stroke-width="4.1" opacity="0.57"/><path d="M837 506C842 504 847 505 851 508S861 512 866 510" stroke="#c88031" stroke-width="3.1" opacity="0.50"/><path d="M849 534C854 532 860 533 864 537S873 542 878 540" stroke="#a5672a" stroke-width="3.2" opacity="0.45"/><path d="M851 535C857 533 862 534 866 538S876 543 881 541" stroke="#d18a38" stroke-width="2.4" opacity="0.40"/><path d="M919 519C924 518 929 519 933 521S942 524 947 523" stroke="#8c5722" stroke-width="3.6" opacity="0.64"/><path d="M922 520C927 519 932 520 936 522S945 525 949 524" stroke="#d18a38" stroke-width="2.7" opacity="0.56"/><path d="M855 518C860 523 865 525 871 525S884 527 888 531" stroke="#8c5722" stroke-width="3.5" opacity="0.69"/><path d="M857 519C862 524 868 526 874 526S886 528 890 532" stroke="#d18a38" stroke-width="2.6" opacity="0.60"/><path d="M888 520C893 521 897 523 900 526S908 531 912 532" stroke="#8c5722" stroke-width="4.9" opacity="0.66"/><path d="M892 522C896 523 901 525 903 528S911 533 915 533" stroke="#d18a38" stroke-width="3.7" opacity="0.58"/><path d="M890 505C893 511 898 513 904 513S915 515 918 520" stroke="#8c5722" stroke-width="3.7" opacity="0.58"/><path d="M893 507C896 512 901 514 906 514S918 516 920 521" stroke="#d18a38" stroke-width="2.7" opacity="0.51"/><path d="M874 525C879 525 884 526 889 529S899 533 904 532" stroke="#7c4c1f" stroke-width="3.4" opacity="0.49"/><path d="M876 526C882 526 887 527 891 530S901 534 906 533" stroke="#c88031" stroke-width="2.6" opacity="0.43"/><path d="M894 519C897 522 900 524 904 524S912 526 914 529" stroke="#7c4c1f" stroke-width="3.3" opacity="0.54"/><path d="M896 520C899 523 903 525 906 525S914 527 916 530" stroke="#c88031" stroke-width="2.5" opacity="0.47"/><path d="M867 518C871 522 875 524 881 523S891 524 894 528" stroke="#8c5722" stroke-width="3.6" opacity="0.54"/><path d="M869 519C873 524 878 525 883 524S894 525 897 530" stroke="#d18a38" stroke-width="2.7" opacity="0.48"/><path d="M839 531C843 533 847 533 851 532S860 531 864 533" stroke="#7c4c1f" stroke-width="4.7" opacity="0.51"/><path d="M842 533C846 534 851 535 855 534S864 533 867 534" stroke="#c88031" stroke-width="3.5" opacity="0.46"/><path d="M887 502C893 501 899 503 902 508S911 516 917 514" stroke="#8c5722" stroke-width="4.6" opacity="0.63"/><path d="M890 504C897 502 902 504 905 510S914 517 920 516" stroke="#d18a38" stroke-width="3.4" opacity="0.56"/><path d="M856 524C862 528 868 529 873 526S886 523 891 527" stroke="#8c5722" stroke-width="4.6" opacity="0.75"/><path d="M859 526C865 529 871 530 876 527S889 525 894 529" stroke="#c88031" stroke-width="3.5" opacity="0.65"/></g>
<path d="M812 628C850 668 960 676 1012 622L1024 619Z" fill="#a5672a" opacity="0.0"/>
<path d="M806 622C822 648 850 660 880 664C915 668 950 664 985 648C1000 640 1012 628 1024 619L1010 650L975 668L940 680L895 680L855 674L820 657Z" fill="#9c632a" opacity="0.9" filter="url(#b4)"/>
<path d="M808 625C826 650 858 662 895 666C935 668 975 655 1010 628" stroke="#7f4f20" stroke-width="5" fill="none" opacity="0.55" filter="url(#b2)"/>
<path d="M1082 425C1108 480 1100 545 1050 610" stroke="#a0642a" stroke-width="34" fill="none" opacity="0.7" filter="url(#b8)"/>
<ellipse cx="1050" cy="585" rx="42" ry="46" fill="#7d5022" opacity="0.6" transform="rotate(35 1050 585)" filter="url(#b8)"/>
<path d="M714 656.500L798 616C799.4 616.1 803.6 629.2 807.6 636.6C811.6 644.0 813.2 650.3 821.7 656.4C830.2 662.5 845.8 669.6 858.5 673.4C871.2 677.2 884.0 678.1 898.1 679.1C912.2 680.1 931.1 681.5 943.4 679.1C955.7 676.7 962.3 669.6 971.7 664.9C981.1 660.2 994.1 656.0 1000.0 650.8C1005.9 645.6 1003.1 639.1 1007.1 633.8C1011.1 628.5 1021.2 621.5 1024.0 619.0L1092 640L938.100 713.300Z" fill="#b2702c"/>
<polygon points="712,655.500 938.100,713.300 938.100,745 712,684" fill="url(#lf)"/>
<polygon points="938.100,713.300 1096,637 1096,669 938.100,745" fill="#8a5a29"/>
<path d="M797.7 612.0C799.4 616.1 803.6 629.2 807.6 636.6C811.6 644.0 813.2 650.3 821.7 656.4C830.2 662.5 845.8 669.6 858.5 673.4C871.2 677.2 884.0 678.1 898.1 679.1C912.2 680.1 931.1 681.5 943.4 679.1C955.7 676.7 962.3 669.6 971.7 664.9C981.1 660.2 994.1 656.0 1000.0 650.8C1005.9 645.6 1003.1 639.1 1007.1 633.8C1011.1 628.5 1021.2 621.5 1024.0 619.0" fill="none" stroke="#7d4c1e" stroke-width="6" opacity="0.4" filter="url(#b2)"/>
<path d="M794.9 616.4C794.4 614.3 793.4 607.5 791.9 603.6C790.4 599.7 787.9 596.5 785.7 593.0C783.5 589.5 780.9 586.3 778.7 582.5C776.5 578.7 774.3 574.3 772.5 570.2C770.7 566.1 769.2 562.0 768.1 557.9C767.0 553.8 766.3 549.4 766.0 545.6C765.7 541.8 766.5 538.5 766.4 535.0C766.3 531.5 766.7 528.0 765.5 524.5C764.3 521.0 760.8 517.4 759.3 513.9C757.8 510.4 756.8 507.0 756.2 503.4C755.6 499.8 755.6 495.1 755.8 492.0C756.0 488.9 757.5 486.3 757.2 485.0C756.9 483.7 755.9 484.4 754.2 484.2C752.5 483.9 749.6 484.7 747.1 483.5C744.6 482.3 741.6 479.9 739.4 477.2C737.2 474.5 735.5 470.7 733.8 467.4C732.0 464.1 730.3 461.0 728.9 457.5C727.5 454.0 726.2 450.1 725.4 446.3C724.6 442.6 724.2 438.8 724.0 435.0C723.8 431.2 723.9 427.3 724.0 423.8C724.1 420.3 723.9 417.1 724.7 414.0C725.5 410.9 727.0 408.3 728.9 405.5C730.8 402.7 733.3 399.9 735.9 397.1C738.5 394.3 741.2 391.3 744.3 388.7C747.3 386.1 751.8 383.3 754.2 381.6C756.7 379.9 757.7 380.4 759.0 378.5C760.3 376.6 761.0 373.9 762.0 370.0C763.0 366.1 764.3 360.0 764.8 355.0C765.3 350.0 765.7 345.8 764.8 340.0C763.9 334.2 760.3 326.7 759.2 320.0C758.1 313.3 758.2 305.8 758.1 300.0C758.0 294.2 757.9 288.3 758.3 285.0C758.6 281.7 758.7 282.5 760.2 280.0C761.7 277.5 765.0 273.3 767.2 270.0C769.5 266.7 771.4 263.3 773.7 260.0C776.0 256.7 778.8 253.2 781.2 250.0C783.6 246.8 785.6 243.1 788.1 240.6C790.6 238.1 793.5 236.6 796.2 234.9C798.9 233.2 801.6 231.8 804.3 230.5C807.0 229.2 809.6 228.1 812.3 227.2C815.0 226.2 817.7 225.5 820.4 224.8C823.1 224.1 825.8 223.7 828.5 223.2C831.2 222.7 833.9 222.4 836.6 222.0C839.3 221.6 842.0 221.2 844.7 220.9C847.4 220.6 850.1 220.6 852.8 220.4C855.5 220.2 858.1 219.9 860.8 219.6C863.5 219.3 866.2 219.0 868.9 218.7C871.6 218.4 874.3 218.1 877.0 217.8C879.7 217.5 882.5 217.2 885.1 217.1C887.7 216.9 889.8 216.8 892.4 216.9C895.0 217.0 897.5 217.2 900.6 217.5C903.7 217.8 907.6 217.9 911.1 218.7C914.6 219.5 918.2 221.1 921.7 222.4C925.2 223.7 928.7 225.2 932.2 226.6C935.7 228.0 939.3 229.4 942.8 230.9C946.3 232.4 949.8 233.8 953.3 235.6C956.8 237.4 960.7 239.6 963.9 241.9C967.1 244.2 969.8 246.8 972.3 249.3C974.8 251.8 976.9 254.2 978.7 256.7C980.5 259.2 981.9 262.0 982.9 264.1C983.9 266.2 983.6 267.8 985.0 269.4C986.4 271.0 988.8 271.9 991.3 273.6C993.8 275.4 997.3 278.0 999.8 279.9C1002.3 281.8 1004.2 282.7 1006.1 285.2C1008.0 287.7 1008.9 290.9 1011.3 295.0C1013.7 299.1 1017.5 305.0 1020.6 310.0C1023.7 315.0 1027.3 320.0 1030.0 325.0C1032.7 330.0 1034.7 335.3 1036.6 340.0C1038.5 344.7 1039.0 349.0 1041.3 353.1C1043.6 357.2 1047.2 360.3 1050.6 364.4C1054.0 368.5 1058.8 372.8 1061.9 377.5C1065.0 382.2 1066.9 387.2 1069.4 392.5C1071.9 397.8 1074.4 404.1 1076.9 409.4C1079.4 414.7 1082.1 420.5 1084.4 424.4C1086.8 428.3 1088.6 429.6 1091.0 433.0C1093.4 436.4 1096.4 440.4 1098.7 444.8C1101.0 449.2 1103.2 454.7 1104.9 459.6C1106.6 464.5 1107.9 469.5 1108.6 474.4C1109.3 479.3 1109.4 484.2 1109.3 489.1C1109.2 494.0 1108.8 499.0 1108.1 503.9C1107.4 508.8 1106.3 513.8 1104.9 518.7C1103.5 523.6 1101.8 528.6 1099.9 533.5C1098.1 538.4 1096.2 543.4 1093.8 548.3C1091.3 553.2 1088.3 558.6 1085.2 563.1C1082.1 567.6 1079.0 570.9 1075.3 575.4C1071.6 579.9 1067.3 585.7 1063.0 590.2C1058.7 594.7 1054.1 598.4 1049.4 602.5C1044.7 606.6 1037.7 611.8 1034.6 614.8C1031.5 617.8 1031.6 619.6 1031.0 620.6L1093.9 637.4L1093.9 667.5L938.6 742.8L712.3 682.6L712.3 654.5Z" fill="none" stroke="#fff" stroke-width="8.800" stroke-linejoin="miter"/>
</g>
<path d="M837 326.300L891.800 338.300L948 312.200M891.800 338.300V427.600" stroke="#d3d8e0" stroke-width="2.300" fill="none" opacity="0.95"/>
<path d="M892.200 696V783.200" stroke="#e6e8ee" stroke-width="2.300" fill="none"/>
<path d="M432 703.500V640" stroke="#0000a8" stroke-width="2.400" fill="none"/><path d="M432 631l3.600 13h-7.200z" fill="#0000a8"/>
<path d="M432 703.500L466 687.500" stroke="#00a040" stroke-width="2.400" fill="none"/><path d="M474 684l-9.500 1l3 6z" fill="#00a040"/>
<path d="M432 703.500L484 717.500" stroke="#c81818" stroke-width="2.400" fill="none"/><path d="M494.500 720.500l-11.500 -6.500l-2 6.500z" fill="#c81818"/>
<polygon points="439.500,762 476.900,744.400 500.400,773.700 500.400,831 439.500,822.200" fill="#c6c6c6"/>
<polygon points="439.500,762 476.900,744.400 528.800,757.100 500.400,773.700" fill="#cacaca"/>
<polygon points="500.400,773.700 528.800,757.100 528.800,817.300 495.600,834.600 439.500,822.200 500.400,831" fill="#c8c8c8"/>
<polygon points="439.500,762 500.400,773.700 495.600,834.600 439.500,822.200" fill="#c6c6c6"/>
<path d="M500.400 773.700L497 834M439.500 762L500.400 773.700L528.800 757.100" stroke="#d2d2d2" stroke-width="0.700" stroke-dasharray="1 1.500" fill="none"/>
<text transform="matrix(0.97 0.22 0 1 452.500 802)" font-family="Liberation Sans, sans-serif" font-size="10.500" fill="#3f4345">Front</text>
<text transform="matrix(0.86 -0.5 0 1 500.500 804.500)" font-family="Liberation Sans, sans-serif" font-size="10.500" fill="#3f4345">Right</text>
<text transform="matrix(0.95 0.28 -0.8 0.42 474.500 757.500)" font-family="Liberation Sans, sans-serif" font-size="10" fill="#6b6f71">Top</text>
<path d="M439.500 822.500V766" stroke="#6c80c2" stroke-width="2.200"/><path d="M439.200 756.500l6 12h-12z" fill="#6c80c2"/>
<path d="M439.500 822.500L488 834.500" stroke="#b9805a" stroke-width="2.200"/><path d="M497 837l-12.500 3.500l3.500-12.500z" fill="#b9805a"/>
<text x="434.500" y="750" font-family="Liberation Sans, sans-serif" font-size="10.500" fill="#5a6fb5">Z</text>
<text x="501.500" y="845" font-family="Liberation Sans, sans-serif" font-size="10.500" fill="#b9805a">X</text>
<circle cx="574.800" cy="822.200" r="18" fill="#f9f9f9"/>
<g fill="none" stroke="#4a4f51" stroke-width="1.500" stroke-linecap="round" stroke-linejoin="round"><path d="M565 816v-3a2 2 0 0 1 2-2h3M579.500 811h3a2 2 0 0 1 2 2v3M584.500 828.500v3a2 2 0 0 1-2 2h-3M570 833.500h-3a2 2 0 0 1-2-2v-3"/><path d="M574.800 815.500l5.200 3v6l-5.200 3-5.200-3v-6zM569.600 818.500l5.200 3 5.200-3M574.800 821.500v6"/></g>
</svg></div><div class="abs" style="left:445px;top:67px;width:1013.500px;height:50px;background:#fafafa"></div><svg class="abs" style="left:445px;top:67px" width="1014" height="50" viewBox="445 67 1014 50" fill="none" stroke="#353c3e" stroke-width="1.150" stroke-linejoin="round"><path d="M451.700 84.800H472.300V105.400H451.700ZM472.300 84.800L482 75.500V92" /><path d="M451.700 84.800L461.400 75.500H482L472.300 84.800Z" stroke-width="1.700"/><circle cx="482" cy="98.500" r="7.200" fill="#fafafa"/><path d="M477.200 98.500h9.600M482 93.700v9.600"/><path d="M497.4 76.700V104.800M497.400 76.7H526.500M503.2 76.700V104.800M497.400 82.3H526.500M509.0 76.700V104.800M497.400 87.9H526.500M514.9 76.700V104.800M497.400 93.6H526.500M520.7 76.700V104.800M497.400 99.2H526.500M526.5 76.700V104.800M497.400 104.8H526.500"/><circle cx="524.100" cy="100.600" r="7.200" fill="#fafafa"/><path d="M519.300 100.600h9.600M524.100 95.800v9.600"/><path d="M558.400 76.700L576 81.500L571.100 99L553.300 94.100Z"/><path d="M551.700 89.700L546.500 94.500M542.600 94.100L549.300 95.700L544.700 101.200Z"/><rect x="545" y="104.600" width="29.800" height="2.600" rx="1.300"/><text x="541.500" y="86.200" font-family="Liberation Sans, sans-serif" font-size="5.600" font-weight="bold" fill="#353c3e" stroke="none" textLength="12.800" lengthAdjust="spacingAndGlyphs">AUTO</text><rect x="586.300" y="76.300" width="31.600" height="30.900"/><rect x="590" y="79.100" width="24.800" height="8.500"/><rect x="590" y="90.300" width="7.200" height="13.500"/><rect x="600" y="90.300" width="14.800" height="5.400"/><rect x="600" y="98.500" width="14.800" height="5.300"/><path d="M646.0 103H640.3V75.500H659.5L663.5 79.500" /><path d="M646.4 80.600H665.6L669.4 84.300V108.500H646.4Z" fill="#fafafa"/><path d="M690.0 103H684.3V75.500H703.5L707.5 79.500" /><path d="M690.4 80.600H709.6L713.4 84.300V108.500H690.4Z" fill="#fafafa"/><ellipse cx="658.200" cy="94.800" rx="4.600" ry="7.300"/><text x="696.200" y="102.500" font-family="Liberation Sans, sans-serif" font-size="19.500" fill="#353c3e" stroke="none">P</text><path d="M729.700 80.300H757.400" stroke-width="1.800"/><rect x="730" y="83.700" width="27.200" height="1.700" rx="0.800"/><rect x="730" y="87.700" width="27.200" height="3.400" rx="1.200"/><rect x="730" y="93.700" width="27.200" height="4.100" rx="1.200"/><rect x="730" y="100.600" width="27.200" height="4.800" rx="1.200"/><path d="M781.600 77V107.200M1396.800 77V107.200" stroke="#9b9e9f" stroke-width="1"/><rect x="816.2" y="89.6" width="4.400" height="4.400"/><path d="M0 -16.700L5.500 -10.700H2.200V-7H-2.200V-10.700H-5.500Z" transform="translate(818.4 91.8) rotate(0)"/><path d="M0 -16.700L5.500 -10.700H2.200V-7H-2.200V-10.700H-5.500Z" transform="translate(818.4 91.8) rotate(90)"/><path d="M0 -16.700L5.500 -10.700H2.200V-7H-2.200V-10.700H-5.500Z" transform="translate(818.4 91.8) rotate(180)"/><path d="M0 -16.700L5.500 -10.700H2.200V-7H-2.200V-10.700H-5.500Z" transform="translate(818.4 91.8) rotate(270)"/><path d="M863.300 84.800L875.100 96.300L863.300 108.200L851.800 96.300Z"/><path d="M849 97A14 14 0 0 1 872.800 80.500"/><path d="M870.200 85.400L876.900 78.100L879.300 88.400Z"/><rect x="892.600" y="90.300" width="17" height="16.900"/><path d="M892.600 90.300V76.700H923.600V107.200H909.600" stroke-dasharray="2.600 2.200"/><path d="M911.400 88.400L917.800 82.500L915.800 80.500L921 79.500L920 84.800L918.500 83.300L912.200 89.200Z" stroke-width="0.900"/><path d="M952.700 76.900L970.600 81.500L966 99L948.400 94.500Z"/><path d="M946 89.700L941 94.300M937.500 93.900L944.400 95.700L939.300 101.400Z"/><rect x="940.600" y="104.600" width="29.100" height="2.600" rx="1.300"/><rect x="984.100" y="76.700" width="28.700" height="12.300"/><rect x="984.100" y="93.700" width="28.700" height="13.500"/><path d="M984.100 91.500H1012.800" stroke-dasharray="1.200 1.200" stroke-width="1"/><g stroke="#cfd0d0" stroke-width="1.300"><rect x="1037.500" y="76.300" width="23.300" height="22.700"/><rect x="1027.200" y="84.400" width="23.200" height="23.100"/><path d="M1038.500 90L1043.500 85M1038.500 95L1048.500 85M1040 98.500L1050 88.500M1045 98.500L1050 93.500" stroke-width="1"/></g><rect x="1075.100" y="89.700" width="11.500" height="17.500" fill="#00ae42" stroke="none"/><path d="M1075.500 96L1081 90M1075.500 101L1086 90M1075.500 106L1086.500 94.500M1079 107L1086.500 99.500M1083.500 107L1086.500 104" stroke="#d9f3e2" stroke-width="0.900"/><path d="M1073.500 76.700H1104.200V107.200H1090.200V89H1073.500Z"/><path d="M1118.500 86H1139.400V107.200H1118.500ZM1149.700 76.700V97.800L1139.400 107.200"/><path d="M1118.500 86L1129 76.700H1149.700L1139.400 86Z" stroke-width="1.600"/><path d="M1123.600 87.800Q1125 97 1130.900 104.800" stroke-dasharray="1 1.400" stroke-width="1.100"/><path d="M1163.200 76.700H1187.800V81.800H1179.900V107H1172.600V81.800H1163.200Z"/><text x="1182.300" y="107" font-family="Liberation Sans, sans-serif" font-size="24" fill="#fafafa" stroke="#353c3e" stroke-width="1" textLength="12.500" lengthAdjust="spacingAndGlyphs">a</text><path d="M1222.300 76.900L1236.500 90.900L1221.100 106.600L1207.200 92.100ZM1209 90.700H1236.500"/><path d="M1210.600 75.700L1221.700 86.900" stroke-width="3"/><path d="M1237.200 94.500C1240 99 1241.700 101.500 1241.700 104A4.500 4.500 0 0 1 1232.700 104C1232.700 101.500 1234.400 99 1237.200 94.500Z" fill="#fafafa"/><rect x="1254.500" y="85.400" width="29.100" height="13.100" stroke-width="1.400"/><path d="M1257.6 85.400V88.5M1260.5 85.400V88.5M1263.5 85.400V90.8M1266.6 85.400V88.5M1269.7 85.400V88.5M1272.8 85.400V90.8M1275.8 85.400V88.5M1278.8 85.400V88.5M1281.0 85.400V90.8" stroke-width="1"/><g stroke="#d2d3d3" stroke-width="1.200"><rect x="1301.500" y="97.300" width="29.600" height="9.300" stroke-dasharray="1.500 1"/><rect x="1308.400" y="89.700" width="15.500" height="7.600" stroke-dasharray="1.500 1"/><path d="M1312.700 77.500L1327 84.200L1324.200 89L1310.300 82.700Z"/><path d="M1299.300 89L1306.600 90.900L1301.200 95.100ZM1307.500 84.500L1304 89.500"/></g><circle cx="1348.3" cy="81.8" r="5.100"/><path d="M1343.7 83.0l6.400 -6.400M1344.7 85.4l7.200 -7.200M1346.7 86.6l6.400 -6.400" stroke-width="0.900"/><circle cx="1368.7" cy="81.8" r="5.100"/><path d="M1364.1 83.0l6.400 -6.400M1365.1 85.4l7.200 -7.200M1367.1 86.6l6.400 -6.400" stroke-width="0.900"/><circle cx="1348.3" cy="102.4" r="5.100"/><path d="M1343.7 103.6l6.400 -6.400M1344.7 106.0l7.200 -7.200M1346.7 107.2l6.400 -6.400" stroke-width="0.900"/><circle cx="1368.7" cy="102.4" r="5.100"/><path d="M1364.1 103.6l6.400 -6.400M1365.1 106.0l7.200 -7.200M1367.1 107.2l6.400 -6.400" stroke-width="0.900"/><rect x="1348.600" y="82.400" width="19.700" height="19.700" fill="#fafafa" stroke-width="1.400"/><path d="M1417.400 83.600H1428.500V88.500Q1426 91.500 1428.500 93.500Q1431 95 1430 97.500V108.500H1417.400ZM1417.400 96H1421Q1423.500 99.500 1426 96H1430M1430 108.500H1442.500V96H1438Q1436.500 92.500 1433.500 95L1430 97.500M1430 100.500Q1432.500 102 1430.500 105"/><path d="M1440.800 75.500L1449.600 84.200L1440.800 92.700L1438 90Q1439.500 86.500 1436.500 87.500L1432.600 84.200L1434.500 82Q1437.500 82.500 1436.500 79.500Z"/></svg><div class="abs" style="left:1097px;top:119px;width:141px;height:31px;background:#3d4143"></div><span class="t" style="left:1105px;top:127px;font-size:13.300px;color:#fff">Supports Painting [L]</span><div class="abs" style="left:1099px;top:769px;width:375px;height:75px;background:#fff;border:1px solid #1aa83a;border-radius:4px;overflow:hidden"><div class="abs" style="left:0;top:0;width:8px;height:75px;background:#0da431"></div><div class="abs" style="left:14.500px;top:5.500px;font-size:12.800px;line-height:15px;color:#3c3c3c;white-space:nowrap">Object name: ABRADOR.stl<br>Size: 135.044 x 184.241 x 184.345 mm<br>Volume: 1.58241e+06 mm<span style="font-size:8px;line-height:0;position:relative;top:-5px">3</span><br>Triangles: 298160</div><div class="abs" style="left:341px;top:6px;width:25px;height:25px;border-radius:13px;background:#ededed"></div><svg class="abs" style="left:341px;top:6px" width="25" height="25"><path d="M6 6l13 13M19 6l-13 13" stroke="#6b6b6b" stroke-width="1" fill="none"/></svg><div class="abs" style="left:354px;top:55px;width:12px;height:12px;border-radius:6px;background:#ededed"></div><div class="abs" style="left:356.500px;top:60.500px;width:7px;height:1.500px;background:#c4c4c4"></div></div><svg class="abs" style="left:0;top:0;pointer-events:none" width="1484" height="853" viewBox="0 0 1484 853"><path d="M265.5 398.5L272.2 414.6L288.5 402.5Z" fill="#fa1408"/><circle cx="281.0" cy="373.6" r="30.300" fill="#fa1408"/><text x="281.0" y="386.3" text-anchor="middle" font-family="Liberation Sans, sans-serif" font-size="35.500" fill="#fff">1</text><path d="M287.5 474.0L273.1 495.8L297.0 499.0Z" fill="#fa1408"/><circle cx="315.8" cy="474.8" r="30.300" fill="#fa1408"/><text x="315.8" y="487.5" text-anchor="middle" font-family="Liberation Sans, sans-serif" font-size="35.500" fill="#fff">2</text><path d="M398.0 516.0L374.8 528.0L398.0 541.0Z" fill="#fa1408"/><circle cx="424.1" cy="530.1" r="30.300" fill="#fa1408"/><text x="424.1" y="542.8" text-anchor="middle" font-family="Liberation Sans, sans-serif" font-size="35.500" fill="#fff">3</text><path d="M1143.5 466.0L1118.3 483.9L1143.5 501.0Z" fill="#fa1408"/><circle cx="1167.5" cy="483.9" r="30.300" fill="#fa1408"/><text x="1167.5" y="496.6" text-anchor="middle" font-family="Liberation Sans, sans-serif" font-size="35.500" fill="#fff">4</text><path d="M1053.0 122.5L1076.4 111.3L1074.5 136.0Z" fill="#fa1408"/><circle cx="1047.4" cy="148.7" r="30.300" fill="#fa1408"/><text x="1047.4" y="161.4" text-anchor="middle" font-family="Liberation Sans, sans-serif" font-size="35.500" fill="#fff">5</text></svg>
<svg id="corners" class="abs" style="left:0;top:0;pointer-events:none" width="1484" height="12" viewBox="0 0 1484 12"><path d="M0 0h9a9 9 0 0 0-9 9z" fill="#000"/><path d="M1484 0h-9a9 9 0 0 1 9 9z" fill="#000"/></svg>
</body></html>
